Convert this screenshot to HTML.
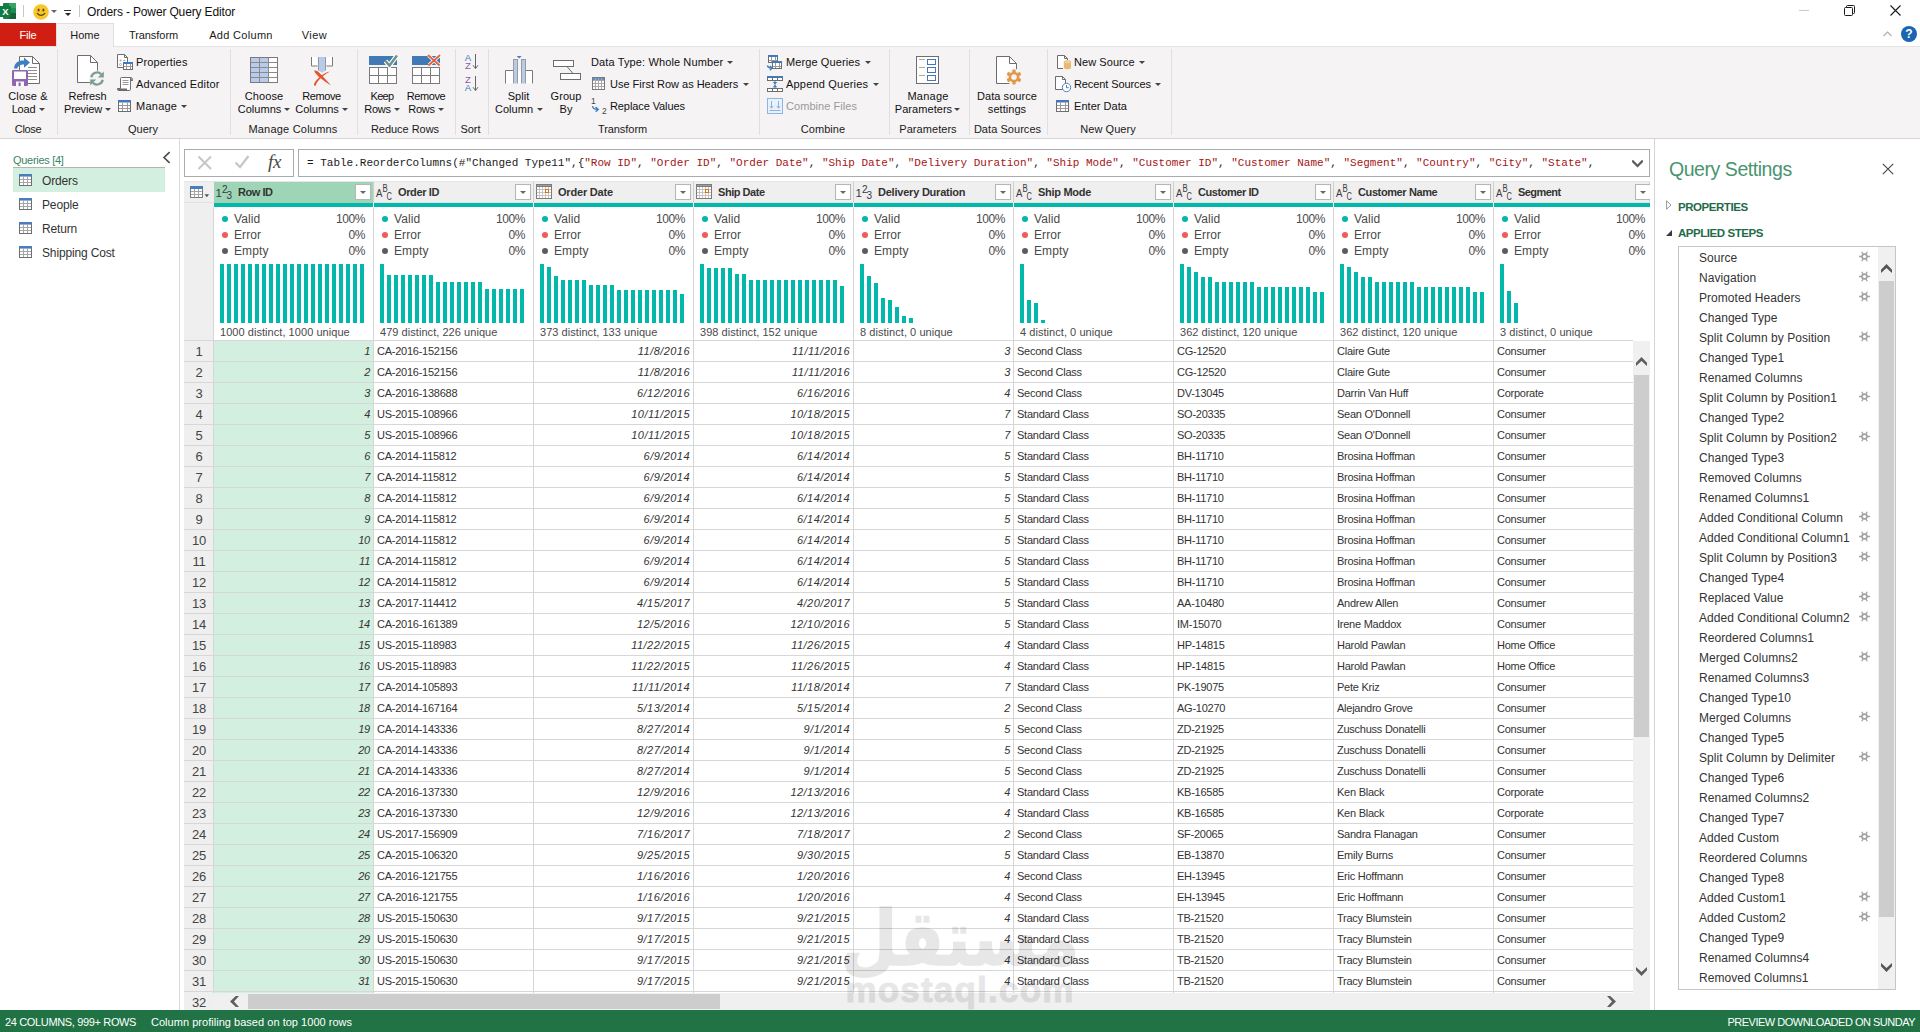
<!DOCTYPE html>
<html lang="en"><head><meta charset="utf-8"><title>Orders - Power Query Editor</title>
<style>
*{box-sizing:border-box;margin:0;padding:0}
html,body{width:1920px;height:1032px;overflow:hidden;background:#fff}
body{position:relative;font-family:"Liberation Sans",sans-serif;font-size:12px;color:#262626;line-height:1}
.a{position:absolute}
.t{position:absolute;white-space:nowrap;line-height:14px;height:14px}
.c{text-align:center}
.r{text-align:right}
svg{position:absolute;overflow:visible}
#ribbon{left:0;top:46px;width:1920px;height:93px;background:#f5f3f4;border-top:1px solid #e4e2e3;border-bottom:1px solid #d6d4d5}
.sep{position:absolute;top:49px;width:1px;height:86px;background:#e1dfe0}
.rt{font-size:11px;color:#111;letter-spacing:.05px}
.gl{font-size:11px;color:#1a1a1a;letter-spacing:.05px}
.tab{font-size:11px;color:#1a1a1a;letter-spacing:.05px}
.dd{position:absolute;width:0;height:0;border-left:3px solid transparent;border-right:3px solid transparent;border-top:3px solid #444}
.q{font-size:12px;color:#333;letter-spacing:-.15px}
.hdr{position:absolute;top:182px;height:21px;background:#efefef;border-right:1px solid #d0d0d0}
.hn{font-weight:bold;font-size:11px;color:#333;letter-spacing:-.35px}
.fb{position:absolute;top:184px;width:16px;height:16px;background:#fff;border:1px solid #b5b5b5}
.teal{position:absolute;top:203px;height:4px;background:#01b8aa}
.pf{font-size:12px;color:#4a4a4a;letter-spacing:.1px}
.ds{font-size:11px;color:#4a4a4a;letter-spacing:.05px}
.dot{position:absolute;width:6px;height:6px;border-radius:3px}
.bar{position:absolute;width:4px;background:#01b8aa}
.cell{font-size:11px;color:#333;letter-spacing:-.25px}
.ci{font-size:11px;color:#333;font-style:italic;letter-spacing:-.25px}
.rn{font-size:13px;color:#444;letter-spacing:-.2px}
.hl{position:absolute;height:1px;background:#d7d7d7}
.vl{position:absolute;width:1px;background:#d6d6d6}
.st{font-size:12px;color:#333;letter-spacing:.05px}
.mono{font-family:"Liberation Mono",monospace;font-size:11px;color:#1a1a1a;white-space:pre}
.mono b{font-weight:normal;color:#a31515}
</style></head>
<body>

<svg style="left:0;top:3px" width="17" height="17" viewBox="0 0 17 17">
<rect x="3" y="0" width="13" height="16" rx="1" fill="#1f7a4a"/>
<rect x="9" y="0" width="7" height="5" fill="#33a567"/><rect x="9" y="5" width="7" height="5" fill="#1f8a52"/><rect x="9" y="10" width="7" height="6" fill="#17603a"/>
<rect x="0" y="3" width="11" height="11" fill="#107c41"/>
<text x="5.5" y="12" font-family="Liberation Sans,sans-serif" font-weight="bold" font-size="9.5" fill="#fff" text-anchor="middle">X</text>
</svg>
<div class="a" style="left:23px;top:5px;width:1px;height:12px;background:#c8c8c8"></div>
<svg style="left:33px;top:4px" width="16" height="16" viewBox="0 0 16 16">
<circle cx="8" cy="8" r="7.8" fill="#f8c52c"/>
<ellipse cx="5.6" cy="6" rx="1" ry="1.5" fill="#5a4308"/><ellipse cx="10.4" cy="6" rx="1" ry="1.5" fill="#5a4308"/>
<path d="M4.2 9.4 Q8 13.4 11.8 9.4" fill="none" stroke="#5a4308" stroke-width="1.2" stroke-linecap="round"/>
</svg>
<div class="dd" style="left:51px;top:10px;border-top-color:#666"></div>
<div class="a" style="left:64px;top:10px;width:7px;height:1px;background:#333"></div>
<div class="dd" style="left:64.5px;top:13px;border-left-width:3px;border-right-width:3px;border-top-width:3px;border-top-color:#222"></div>
<div class="a" style="left:79px;top:5px;width:1px;height:12px;background:#c8c8c8"></div>
<div class="t" style="top:5px;left:87px;font-size:12px;letter-spacing:-.15px;color:#111;">Orders - Power Query Editor</div>
<div class="a" style="left:1799px;top:10px;width:10px;height:1px;background:#c9c9c9"></div>
<svg style="left:1844px;top:5px" width="11" height="11" viewBox="0 0 11 11" fill="none" stroke="#1a1a1a" stroke-width="1">
<rect x="0.5" y="2.5" width="8" height="8" rx="1"/><path d="M2.5 2.5 V1.5 a1 1 0 0 1 1 -1 H9.5 a1 1 0 0 1 1 1 V7.5 a1 1 0 0 1 -1 1 H8.5"/></svg>
<svg style="left:1890px;top:5px" width="11" height="11" viewBox="0 0 11 11" fill="none" stroke="#1a1a1a" stroke-width="1.1">
<path d="M0.5 0.5 L10.5 10.5 M10.5 0.5 L0.5 10.5"/></svg>
<svg style="left:1883px;top:31px" width="9" height="6" viewBox="0 0 9 6" fill="none" stroke="#b0b0b0" stroke-width="1.2"><path d="M0.5 5 L4.5 1 L8.5 5"/></svg>
<svg style="left:1901px;top:26px" width="16" height="16" viewBox="0 0 16 16"><circle cx="8" cy="8" r="8" fill="#1a66b3"/>
<text x="8" y="12.3" font-family="Liberation Sans,sans-serif" font-weight="bold" font-size="12" fill="#fff" text-anchor="middle">?</text></svg>
<div class="a" style="left:0px;top:23px;width:56px;height:23px;background:#d01f12"></div>
<div class="t tab c" style="top:28px;left:0.0px;width:56px;color:#fff;letter-spacing:-0.237px;">File</div>
<div class="a" id="ribbon"></div>
<div class="a" style="left:56px;top:23px;width:58px;height:24px;background:#f5f3f4;border:1px solid #e1dfe0;border-bottom:none"></div>
<div class="t tab c" style="top:28px;left:56.0px;width:58px;letter-spacing:-0.023px;">Home</div>
<div class="t tab c" style="top:28px;left:113.5px;width:80px;letter-spacing:-0.053px;">Transform</div>
<div class="t tab c" style="top:28px;left:196.0px;width:90px;letter-spacing:0.305px;">Add Column</div>
<div class="t tab c" style="top:28px;left:289.5px;width:50px;letter-spacing:0.45px;">View</div>
<div class="sep" style="left:57px"></div>
<div class="sep" style="left:230px"></div>
<div class="sep" style="left:357px"></div>
<div class="sep" style="left:455px"></div>
<div class="sep" style="left:488px"></div>
<div class="sep" style="left:759px"></div>
<div class="sep" style="left:889px"></div>
<div class="sep" style="left:969px"></div>
<div class="sep" style="left:1047px"></div>
<div class="sep" style="left:1171px"></div>
<div class="t gl c" style="top:122px;left:-42.0px;width:140px;letter-spacing:-0.351px;">Close</div>
<div class="t gl c" style="top:122px;left:73.0px;width:140px;letter-spacing:-0.019px;">Query</div>
<div class="t gl c" style="top:122px;left:223.0px;width:140px;letter-spacing:0.212px;">Manage Columns</div>
<div class="t gl c" style="top:122px;left:335.0px;width:140px;letter-spacing:-0.027px;">Reduce Rows</div>
<div class="t gl c" style="top:122px;left:400.5px;width:140px;letter-spacing:-0.062px;">Sort</div>
<div class="t gl c" style="top:122px;left:552.5px;width:140px;letter-spacing:-0.053px;">Transform</div>
<div class="t gl c" style="top:122px;left:753.0px;width:140px;">Combine</div>
<div class="t gl c" style="top:122px;left:858.0px;width:140px;">Parameters</div>
<div class="t gl c" style="top:122px;left:937.5px;width:140px;">Data Sources</div>
<div class="t gl c" style="top:122px;left:1038.0px;width:140px;">New Query</div>
<div class="t rt c" style="top:89px;left:-22.0px;width:100px;letter-spacing:0.15px;">Close &amp;</div>
<div class="t rt c" style="top:102px;left:-22.0px;width:100px;letter-spacing:-0.225px;"><span style="margin-right:9px">Load</span></div>
<div class="dd" style="left:39px;top:108px;border-top-color:#444"></div>
<div class="t rt c" style="top:89px;left:37.5px;width:100px;letter-spacing:-0.083px;">Refresh</div>
<div class="t rt c" style="top:102px;left:37.5px;width:100px;letter-spacing:-0.16px;"><span style="margin-right:9px">Preview</span></div>
<div class="dd" style="left:105px;top:108px;border-top-color:#444"></div>
<div class="t rt c" style="top:89px;left:214.0px;width:100px;letter-spacing:0.061px;">Choose</div>
<div class="t rt c" style="top:102px;left:214.0px;width:100px;letter-spacing:0.034px;"><span style="margin-right:9px">Columns</span></div>
<div class="dd" style="left:284px;top:108px;border-top-color:#444"></div>
<div class="t rt c" style="top:89px;left:271.5px;width:100px;letter-spacing:-0.375px;">Remove</div>
<div class="t rt c" style="top:102px;left:271.5px;width:100px;letter-spacing:0.034px;"><span style="margin-right:9px">Columns</span></div>
<div class="dd" style="left:342px;top:108px;border-top-color:#444"></div>
<div class="t rt c" style="top:89px;left:332.0px;width:100px;letter-spacing:-0.662px;">Keep</div>
<div class="t rt c" style="top:102px;left:332.0px;width:100px;letter-spacing:-0.233px;"><span style="margin-right:9px">Rows</span></div>
<div class="dd" style="left:394px;top:108px;border-top-color:#444"></div>
<div class="t rt c" style="top:89px;left:376.0px;width:100px;letter-spacing:-0.375px;">Remove</div>
<div class="t rt c" style="top:102px;left:376.0px;width:100px;letter-spacing:-0.233px;"><span style="margin-right:9px">Rows</span></div>
<div class="dd" style="left:438px;top:108px;border-top-color:#444"></div>
<div class="t rt c" style="top:89px;left:468.5px;width:100px;">Split</div>
<div class="t rt c" style="top:102px;left:468.5px;width:100px;"><span style="margin-right:9px">Column</span></div>
<div class="dd" style="left:537px;top:108px;border-top-color:#444"></div>
<div class="t rt c" style="top:89px;left:516.0px;width:100px;">Group</div>
<div class="t rt c" style="top:102px;left:516.0px;width:100px;">By</div>
<div class="t rt c" style="top:89px;left:878.0px;width:100px;letter-spacing:0.247px;">Manage</div>
<div class="t rt c" style="top:102px;left:878.0px;width:100px;"><span style="margin-right:9px">Parameters</span></div>
<div class="dd" style="left:954px;top:108px;border-top-color:#444"></div>
<div class="t rt c" style="top:89px;left:957.0px;width:100px;">Data source</div>
<div class="t rt c" style="top:102px;left:957.0px;width:100px;">settings</div>
<div class="t rt" style="top:55px;left:136px;letter-spacing:0.138px;">Properties</div>
<div class="t rt" style="top:77px;left:136px;letter-spacing:0.197px;">Advanced Editor</div>
<div class="t rt" style="top:99px;left:136px;letter-spacing:0.247px;">Manage</div>
<div class="dd" style="left:181px;top:105px;border-top-color:#444"></div>
<div class="t rt" style="top:55px;left:591px;letter-spacing:0.122px;">Data Type: Whole Number</div>
<div class="dd" style="left:727px;top:61px;border-top-color:#444"></div>
<div class="t rt" style="top:77px;left:610px;letter-spacing:-0.007px;">Use First Row as Headers</div>
<div class="dd" style="left:743px;top:83px;border-top-color:#444"></div>
<div class="t rt" style="top:99px;left:610px;letter-spacing:-0.095px;">Replace Values</div>
<div class="t rt" style="top:55px;left:786px;letter-spacing:0.103px;">Merge Queries</div>
<div class="dd" style="left:865px;top:61px;border-top-color:#444"></div>
<div class="t rt" style="top:77px;left:786px;letter-spacing:0.194px;">Append Queries</div>
<div class="dd" style="left:873px;top:83px;border-top-color:#444"></div>
<div class="t rt" style="top:99px;left:786px;color:#9a9a9a;letter-spacing:0.059px;">Combine Files</div>
<div class="t rt" style="top:55px;left:1074px;letter-spacing:0.067px;">New Source</div>
<div class="dd" style="left:1139px;top:61px;border-top-color:#444"></div>
<div class="t rt" style="top:77px;left:1074px;letter-spacing:-0.097px;">Recent Sources</div>
<div class="dd" style="left:1155px;top:83px;border-top-color:#444"></div>
<div class="t rt" style="top:99px;left:1074px;letter-spacing:0.041px;">Enter Data</div>
<svg style="left:0;top:0" width="1920" height="140" viewBox="0 0 1920 140"><path d="M19.5 56.5 H32.5 L39.5 63.5 V83.5 H19.5 Z" fill="#fff" stroke="#6d6d6d"/><path d="M32.5 56.5 V63.5 H39.5" fill="none" stroke="#6d6d6d"/><path d="M28 67.5 H37" stroke="#8c8c8c"/><path d="M28 70.5 H37" stroke="#8c8c8c"/><path d="M28 73.5 H37" stroke="#8c8c8c"/><path d="M28 76.5 H37" stroke="#8c8c8c"/><path d="M28 79.5 H37" stroke="#8c8c8c"/><path d="M14 68.5 C14.5 62.5 19 60.3 24 60.6 V57.6 L30 62.6 L24 67.8 V64.6 C20.5 64.4 18 65.5 17.3 68.5 Z" fill="#3f7fc1"/><rect x="12" y="70" width="16" height="16" rx="1.2" fill="#9166b0"/><rect x="14" y="71.5" width="12" height="7.5" fill="#fff"/><rect x="16" y="81.5" width="8" height="4.5" fill="#fff"/><rect x="18.5" y="82.5" width="2.2" height="3.5" fill="#9166b0"/><path d="M77.5 55.5 H90.5 L97.5 62.5 V82.5 H77.5 Z" fill="#fff" stroke="#6d6d6d"/><path d="M90.5 55.5 V62.5 H97.5" fill="none" stroke="#6d6d6d"/><circle cx="97" cy="78.5" r="8" fill="#f5f3f4"/><path d="M91.3 77.2 A5.8 5.8 0 0 1 101.2 74.3" fill="none" stroke="#7c9c93" stroke-width="2.3"/><path d="M103.8 71.4 V77.4 H97.8 Z" fill="#7c9c93"/><path d="M102.7 79.8 A5.8 5.8 0 0 1 92.8 82.7" fill="none" stroke="#7c9c93" stroke-width="2.3"/><path d="M90.2 85.6 V79.6 H96.2 Z" fill="#7c9c93"/><path d="M117.5 54.5 H124.5 L127.5 57.5 V67.5 H117.5 Z" fill="#fff" stroke="#6d6d6d"/><path d="M124.5 54.5 V57.5 H127.5" fill="none" stroke="#6d6d6d"/><circle cx="120.5" cy="60.5" r="1" fill="#a9b08a"/><path d="M123 60.5 H125.5" stroke="#a9b08a"/><circle cx="120.5" cy="64.5" r="1" fill="none" stroke="#9a9a9a" stroke-width=".7"/><rect x="123.5" y="62.5" width="9" height="7" fill="#fff" stroke="#6d6d6d"/><rect x="123" y="62" width="10" height="2" fill="#4178be"/><path d="M124 66.5 H132" stroke="#9a9a9a"/><path d="M126.5 64 V69" stroke="#9a9a9a"/><path d="M130.5 64 V69" stroke="#9a9a9a"/><path d="M120.5 78.5 Q120.5 77.5 121.5 77.5 H130.5 Q132.5 77.5 132.5 79.5 V80.5 H130.5 V89.5 Q130.5 90.5 129 90.5 H118.5 Q117.5 90.5 117.5 89 V88.5 H120.5 Z" fill="#fff" stroke="#6d6d6d"/><path d="M117.5 88.5 H127 V90.5 H118.5 Z" fill="#6d6d6d"/><path d="M130.5 77.5 V80.5 H132.5" fill="#6d6d6d" stroke="#6d6d6d"/><path d="M122.5 80.5 H128.5" stroke="#9a9a9a"/><path d="M122.5 82.5 H128.5" stroke="#9a9a9a"/><path d="M122.5 84.5 H128.5" stroke="#9a9a9a"/><rect x="118.5" y="100.5" width="12" height="11" fill="#fff" stroke="#6d6d6d"/><rect x="118" y="100" width="13" height="2.5" fill="#4178be"/><path d="M119 105.5 H130" stroke="#9a9a9a"/><path d="M119 108.5 H130" stroke="#9a9a9a"/><path d="M122.5 102.5 V111" stroke="#9a9a9a"/><path d="M127.5 102.5 V111" stroke="#9a9a9a"/><rect x="250.5" y="57.5" width="27" height="25" fill="#fff" stroke="#7a7a7a"/><rect x="251" y="58" width="17.5" height="24" fill="#b9cbea"/><path d="M251 62.5 H277" stroke="#8a8a8a"/><path d="M251 67.5 H277" stroke="#8a8a8a"/><path d="M251 72.5 H277" stroke="#8a8a8a"/><path d="M251 77.5 H277" stroke="#8a8a8a"/><path d="M259.5 58 V82 M268.5 58 V82" stroke="#8a8a8a"/><rect x="312" y="57" width="5.5" height="9" fill="#fff"/><rect x="326.5" y="57" width="5.5" height="9" fill="#fff"/><path d="M311.5 57 V66 H317.5 M326.5 66 H332.5 V57" fill="none" stroke="#7a7a7a"/><path d="M318.5 57 H325.5 V70.5 L322 72.8 L318.5 70.5 Z" fill="#b9cbea"/><path d="M318.5 57 V70.5 M325.5 57 V70.5" stroke="#9a9a9a"/><path d="M314 70.6 C316 70.2 317.5 71.2 319 72.6 C323 76.5 327.5 81.5 331 85.6 C327 83.2 322 79.5 318.5 76.5 C316.5 74.6 315 73 314 70.6 Z" fill="#e4552d"/><path d="M330.2 71.8 C327.5 72.6 324.5 74.8 321.5 77.6 C318.5 80.4 316 83.2 315.6 86 C314.4 85.8 313.8 85 314 84 C315.2 81.2 318 78.4 321 75.8 C324 73.4 327 72 330.2 71.8 Z" fill="#e4552d"/><rect x="369" y="56" width="28" height="9" fill="#4079b6"/><rect x="369.5" y="67.5" width="27" height="16" fill="#fff" stroke="#7a7a7a"/><path d="M370 75.5 H396 M378.5 68 V83 M387.5 68 V83" stroke="#7a7a7a"/><path d="M385.5 61 L389.5 65.5 L397 55.5" fill="none" stroke="#fff" stroke-width="4.6"/><path d="M385.5 61 L389.5 65.5 L397 55.5" fill="none" stroke="#6d9384" stroke-width="2.5"/><rect x="412" y="56" width="28" height="9" fill="#4079b6"/><rect x="412.5" y="67.5" width="27" height="16" fill="#fff" stroke="#7a7a7a"/><path d="M413 75.5 H439 M421.5 68 V83 M430.5 68 V83" stroke="#7a7a7a"/><path d="M428.5 55.5 L439 65 M439.5 55.5 L429 65" fill="none" stroke="#fff" stroke-width="3.6"/><path d="M428.5 55.5 L439 65 M439.5 55.5 L429 65" fill="none" stroke="#e0623e" stroke-width="1.8" stroke-linecap="round"/><text x="468" y="60.9" font-family="Liberation Sans,sans-serif" font-size="9.6" fill="#3a7bc4" text-anchor="middle">A</text><text x="468" y="69" font-family="Liberation Sans,sans-serif" font-size="9.6" fill="#8d5aa8" text-anchor="middle">Z</text><path d="M475.5 54 V68.3 M473 65.2 L475.5 68.6 L478 65.2" fill="none" stroke="#666" stroke-width="1"/><text x="468" y="82.9" font-family="Liberation Sans,sans-serif" font-size="9.6" fill="#8d5aa8" text-anchor="middle">Z</text><text x="468" y="91" font-family="Liberation Sans,sans-serif" font-size="9.6" fill="#3a7bc4" text-anchor="middle">A</text><path d="M475.5 76 V90.3 M473 87.2 L475.5 90.6 L478 87.2" fill="none" stroke="#666" stroke-width="1"/><rect x="506" y="71" width="26" height="13" fill="#fff"/><path d="M505.5 84 V70.5 H513 M525.5 70.5 H532.5 V84" fill="none" stroke="#7a7a7a"/><rect x="513.5" y="59.5" width="4" height="25" fill="#b9cbea" stroke="#9b9b9b" stroke-width="1"/><rect x="521.5" y="59.5" width="4" height="25" fill="#b9cbea" stroke="#9b9b9b" stroke-width="1"/><rect x="504" y="83.5" width="30" height="2" fill="#f5f3f4"/><path d="M516.7 56 H521.7 L519.2 58.5 Z" fill="#3f7fc1"/><rect x="553.5" y="60.5" width="20" height="6" fill="#fff" stroke="#6d6d6d"/><rect x="560.5" y="73.5" width="20" height="6" fill="#fff" stroke="#6d6d6d"/><path d="M567 66.5 L573 73.5" stroke="#6d6d6d"/><rect x="592.5" y="77.5" width="12" height="12" fill="#fff" stroke="#7a7a7a"/><rect x="593" y="78" width="11" height="2.6" fill="#5b8fcf"/><path d="M593 80.5 H604 M593 83.5 H604 M593 86.5 H604 M595.5 78 V89 M598.5 78 V89 M601.5 78 V89" stroke="#a8a8a8"/><text x="593.3" y="104" font-family="Liberation Sans,sans-serif" font-size="8.5" fill="#444" text-anchor="middle">1</text><text x="604.3" y="113.5" font-family="Liberation Sans,sans-serif" font-size="8.5" fill="#444" text-anchor="middle">2</text><path d="M592.5 106 Q593 109.3 597 109.3 M595.6 107 L598.3 109.4 L595.6 111.8" fill="none" stroke="#3f7fc1" stroke-width="1.4"/><rect x="768.5" y="55.5" width="9" height="7" fill="#fff" stroke="#6d6d6d"/><rect x="768" y="55" width="10" height="2" fill="#4178be"/><path d="M769 60.5 H777" stroke="#9a9a9a"/><path d="M771.5 57 V62" stroke="#9a9a9a"/><path d="M775.5 57 V62" stroke="#9a9a9a"/><rect x="772.5" y="61.5" width="9" height="7" fill="#fff" stroke="#6d6d6d"/><rect x="772" y="61" width="10" height="2" fill="#4178be"/><path d="M773 66.5 H781" stroke="#9a9a9a"/><path d="M775.5 63 V68" stroke="#9a9a9a"/><path d="M779.5 63 V68" stroke="#9a9a9a"/><path d="M767.3 65.5 Q768 68 771.3 68 M769.8 66 L772.3 68 L769.8 70.2" fill="none" stroke="#3f7fc1" stroke-width="1.3"/><rect x="767.5" y="76.5" width="15" height="4" fill="#fff" stroke="#6d6d6d"/><rect x="767" y="76" width="16" height="2" fill="#4178be"/><path d="M772.5 77 V80 M777.5 77 V80" stroke="#6d6d6d"/><rect x="767.5" y="88.5" width="15" height="3" fill="#fff" stroke="#6d6d6d"/><path d="M772.5 89 V92 M777.5 89 V92" stroke="#6d6d6d"/><path d="M772.6 82 H777.4 L775 84.3 Z M772.6 87.3 H777.4 L775 85 Z" fill="#3f7fc1"/><path d="M775 81 V88" stroke="#3f7fc1"/><rect x="767.5" y="98.5" width="15" height="15" fill="#e9f2fb" stroke="#8db5e3"/><path d="M771.5 101 V108 M769.7 106 L771.5 108.2 L773.3 106 M778.5 101 V108 M776.7 106 L778.5 108.2 L780.3 106 M769.5 110.5 H780.5" fill="none" stroke="#8fb3de" stroke-width="1"/><rect x="916.5" y="56.5" width="22" height="27" fill="#fff" stroke="#6d6d6d"/><path d="M919 59.5 H925" stroke="#a9b08a"/><rect x="927.5" y="59.5" width="8" height="5" fill="#fff" stroke="#4178be"/><path d="M919 67.5 H925" stroke="#a9b08a"/><rect x="927.5" y="67.5" width="8" height="5" fill="#fff" stroke="#4178be"/><path d="M919 75.5 H925" stroke="#a9b08a"/><rect x="927.5" y="75.5" width="8" height="5" fill="#fff" stroke="#4178be"/><path d="M996.5 56.5 H1009.5 L1016.5 63.5 V83.5 H996.5 Z" fill="#fff" stroke="#6d6d6d"/><path d="M1009.5 56.5 V63.5 H1016.5" fill="none" stroke="#6d6d6d"/><circle cx="1014" cy="77" r="8.2" fill="#f5f3f4"/><rect x="996.5" y="56.5" width="0" height="0"/><rect x="1012.3" y="69.4" width="3.4" height="4.5" rx="1" fill="#e0994a" transform="rotate(0 1014 77)"/><rect x="1012.3" y="69.4" width="3.4" height="4.5" rx="1" fill="#e0994a" transform="rotate(60 1014 77)"/><rect x="1012.3" y="69.4" width="3.4" height="4.5" rx="1" fill="#e0994a" transform="rotate(120 1014 77)"/><rect x="1012.3" y="69.4" width="3.4" height="4.5" rx="1" fill="#e0994a" transform="rotate(180 1014 77)"/><rect x="1012.3" y="69.4" width="3.4" height="4.5" rx="1" fill="#e0994a" transform="rotate(240 1014 77)"/><rect x="1012.3" y="69.4" width="3.4" height="4.5" rx="1" fill="#e0994a" transform="rotate(300 1014 77)"/><circle cx="1014" cy="77" r="4.1" fill="none" stroke="#e0994a" stroke-width="2.5"/><path d="M1057.5 55.5 H1064.5 L1067.5 58.5 V68.5 H1057.5 Z" fill="#fff" stroke="#6d6d6d"/><path d="M1064.5 55.5 V58.5 H1067.5" fill="none" stroke="#6d6d6d"/><rect x="1063" y="60" width="9" height="10" fill="#f5f3f4"/><path d="M1064 62 V68.3 Q1067.5 70.3 1071 68.3 V62 Z" fill="#e9b974"/><ellipse cx="1067.5" cy="62" rx="3.5" ry="1.4" fill="#f1cf9c" stroke="#e9b974" stroke-width=".6"/><path d="M1055.5 76.5 H1062.5 L1065.5 79.5 V89.5 H1055.5 Z" fill="#fff" stroke="#6d6d6d"/><path d="M1062.5 76.5 V79.5 H1065.5" fill="none" stroke="#6d6d6d"/><circle cx="1066.5" cy="87.5" r="4.2" fill="#fff" stroke="#4a86cf" stroke-width="1"/><path d="M1066.5 85 V87.7 H1068.8" fill="none" stroke="#666" stroke-width=".9"/><rect x="1056.5" y="100.5" width="12" height="11" fill="#fff" stroke="#6d6d6d"/><rect x="1056" y="100" width="13" height="2.5" fill="#4178be"/><path d="M1057 105.5 H1068" stroke="#9a9a9a"/><path d="M1057 108.5 H1068" stroke="#9a9a9a"/><path d="M1060.5 102.5 V111" stroke="#9a9a9a"/><path d="M1065.5 102.5 V111" stroke="#9a9a9a"/></svg>
<div class="a" style="left:179px;top:139px;width:1px;height:871px;background:#dadada"></div>
<div class="t" style="top:153px;left:13px;font-size:11px;color:#3a8561;letter-spacing:-.3px;">Queries [4]</div>
<div class="a" style="left:13px;top:167px;width:152px;height:1px;background:#b4b4b4"></div>
<div class="a" style="left:13px;top:168px;width:152px;height:24px;background:#d3efdf"></div>
<svg style="left:162px;top:151px" width="9" height="13" viewBox="0 0 9 13" fill="none" stroke="#4a4a4a" stroke-width="1.6"><path d="M7.6 1.2 L2 6.5 L7.6 11.8"/></svg>
<svg style="left:19px;top:174px" width="13" height="12" viewBox="0 0 13 12">
<rect x=".5" y=".5" width="12" height="11" fill="#fff" stroke="#6f6f6f"/><rect x="0" y="0" width="13" height="2.6" fill="#4a7ebb"/>
<path d="M1 5.5 H12 M1 8.5 H12 M4.5 3 V11 M8.5 3 V11" stroke="#a5a5a5"/></svg>
<div class="t q" style="top:174px;left:42px;">Orders</div>
<svg style="left:19px;top:198px" width="13" height="12" viewBox="0 0 13 12">
<rect x=".5" y=".5" width="12" height="11" fill="#fff" stroke="#6f6f6f"/><rect x="0" y="0" width="13" height="2.6" fill="#4a7ebb"/>
<path d="M1 5.5 H12 M1 8.5 H12 M4.5 3 V11 M8.5 3 V11" stroke="#a5a5a5"/></svg>
<div class="t q" style="top:198px;left:42px;">People</div>
<svg style="left:19px;top:222px" width="13" height="12" viewBox="0 0 13 12">
<rect x=".5" y=".5" width="12" height="11" fill="#fff" stroke="#6f6f6f"/><rect x="0" y="0" width="13" height="2.6" fill="#4a7ebb"/>
<path d="M1 5.5 H12 M1 8.5 H12 M4.5 3 V11 M8.5 3 V11" stroke="#a5a5a5"/></svg>
<div class="t q" style="top:222px;left:42px;">Return</div>
<svg style="left:19px;top:246px" width="13" height="12" viewBox="0 0 13 12">
<rect x=".5" y=".5" width="12" height="11" fill="#fff" stroke="#6f6f6f"/><rect x="0" y="0" width="13" height="2.6" fill="#4a7ebb"/>
<path d="M1 5.5 H12 M1 8.5 H12 M4.5 3 V11 M8.5 3 V11" stroke="#a5a5a5"/></svg>
<div class="t q" style="top:246px;left:42px;">Shipping Cost</div>
<div class="a" style="left:184px;top:149px;width:110px;height:28px;background:#fff;border:1px solid #ababab"></div>
<svg style="left:197px;top:155px" width="16" height="16" viewBox="0 0 16 16" fill="none" stroke="#c6c6c6" stroke-width="2"><path d="M1.5 1.5 L14 14 M14 1.5 L1.5 14"/></svg>
<svg style="left:234px;top:155px" width="16" height="14" viewBox="0 0 16 14" fill="none" stroke="#c6c6c6" stroke-width="2.2"><path d="M1.5 7.5 L6 12 L14.5 1"/></svg>
<div class="t" style="left:268px;top:152px;height:20px;line-height:20px;font-family:'Liberation Serif',serif;font-style:italic;font-size:19px;color:#4a4a4a;letter-spacing:-.3px">fx</div>
<div class="a" style="left:298px;top:149px;width:1352px;height:28px;background:#fff;border:1px solid #ababab"></div>
<div class="t mono" style="left:307px;top:156px">= Table.ReorderColumns(#&quot;Changed Type11&quot;,{<b>&quot;Row ID&quot;</b>, <b>&quot;Order ID&quot;</b>, <b>&quot;Order Date&quot;</b>, <b>&quot;Ship Date&quot;</b>, <b>&quot;Delivery Duration&quot;</b>, <b>&quot;Ship Mode&quot;</b>, <b>&quot;Customer ID&quot;</b>, <b>&quot;Customer Name&quot;</b>, <b>&quot;Segment&quot;</b>, <b>&quot;Country&quot;</b>, <b>&quot;City&quot;</b>, <b>&quot;State&quot;</b>,</div>
<svg style="left:1632px;top:159.5px" width="11" height="7.5" viewBox="0 0 11 7.5"><polygon points="0,0.6 1.2,0 5.5,4.6 9.8,0 11,0.6 11,2 5.5,7.5 0,2" fill="#5a5a5a"/></svg>
<div class="a" style="left:184px;top:182px;width:30px;height:828px;background:#efefef"></div>
<div class="a" style="left:184px;top:181px;width:1466px;height:1px;background:#e6e6e6"></div>
<div class="hdr" style="left:214px;width:160px;background:#9fd5b7"></div>
<div class="hdr" style="left:374px;width:160px;background:#efefef"></div>
<div class="hdr" style="left:534px;width:160px;background:#efefef"></div>
<div class="hdr" style="left:694px;width:160px;background:#efefef"></div>
<div class="hdr" style="left:854px;width:160px;background:#efefef"></div>
<div class="hdr" style="left:1014px;width:160px;background:#efefef"></div>
<div class="hdr" style="left:1174px;width:160px;background:#efefef"></div>
<div class="hdr" style="left:1334px;width:160px;background:#efefef"></div>
<div class="hdr" style="left:1494px;width:156px;background:#efefef"></div>
<div class="a" style="left:184px;top:202px;width:1466px;height:1px;background:#e2e2e2"></div>
<div class="a" style="left:214px;top:202px;width:159px;height:1px;background:#9fd5b7"></div>
<svg style="left:190px;top:186px" width="22" height="12" viewBox="0 0 22 12">
<rect x=".5" y=".5" width="12" height="11" fill="#fff" stroke="#7a7a7a"/><rect x="0" y="0" width="13" height="3" fill="#4a7ebb"/>
<path d="M1 5.5 H12 M1 8.5 H12 M4.5 3 V11 M8.5 3 V11" stroke="#a5a5a5"/><path d="M14.5 8.3 H19.1 L16.8 11.2 Z" fill="#555"/></svg>
<svg style="left:214px;top:182px" width="20" height="21" viewBox="0 0 20 21" font-family="Liberation Sans,sans-serif" fill="#3a3a3a">
<text x="1.6" y="14.8" font-size="11.5">1</text><text x="8" y="10.8" font-size="10">2</text><text x="12.5" y="17.2" font-size="10">3</text></svg>
<div class="t hn" style="top:185px;left:238px;letter-spacing:-0.46px;">Row ID</div>
<div class="fb" style="left:355px"></div>
<div class="dd" style="left:360px;top:191px;border-top-color:#666"></div>
<svg style="left:374px;top:182px" width="20" height="21" viewBox="0 0 20 21" font-family="Liberation Sans,sans-serif" fill="#3a3a3a">
<text x="2" y="15.3" font-size="10.5" textLength="6.4" lengthAdjust="spacingAndGlyphs">A</text><text x="8.6" y="10.2" font-size="10" textLength="5.2" lengthAdjust="spacingAndGlyphs">B</text><text x="12.4" y="17.6" font-size="10" textLength="5.4" lengthAdjust="spacingAndGlyphs">C</text></svg>
<div class="t hn" style="top:185px;left:398px;letter-spacing:-0.36px;">Order ID</div>
<div class="fb" style="left:515px"></div>
<div class="dd" style="left:520px;top:191px;border-top-color:#666"></div>
<svg style="left:536px;top:184px" width="16" height="15" viewBox="0 0 16 15">
<rect x=".5" y=".5" width="15" height="14" fill="#fff" stroke="#7d7d7d"/><rect x="0" y="0" width="16" height="3" fill="#7d7d7d"/>
<path d="M1.5 1.5 H15" stroke="#bdbdbd" stroke-dasharray="1 1"/>
<path d="M1 5.5 H15 M1 8.5 H15 M1 11.5 H15 M3.5 3 V14 M6.5 3 V14 M9.5 3 V14 M12.5 3 V14" stroke="#c4c4c4"/>
<rect x="9.5" y="5.5" width="3" height="3" fill="#fff" stroke="#dd7311" stroke-width="1"/></svg>
<div class="t hn" style="top:185px;left:558px;letter-spacing:-0.19px;">Order Date</div>
<div class="fb" style="left:675px"></div>
<div class="dd" style="left:680px;top:191px;border-top-color:#666"></div>
<svg style="left:696px;top:184px" width="16" height="15" viewBox="0 0 16 15">
<rect x=".5" y=".5" width="15" height="14" fill="#fff" stroke="#7d7d7d"/><rect x="0" y="0" width="16" height="3" fill="#7d7d7d"/>
<path d="M1.5 1.5 H15" stroke="#bdbdbd" stroke-dasharray="1 1"/>
<path d="M1 5.5 H15 M1 8.5 H15 M1 11.5 H15 M3.5 3 V14 M6.5 3 V14 M9.5 3 V14 M12.5 3 V14" stroke="#c4c4c4"/>
<rect x="9.5" y="5.5" width="3" height="3" fill="#fff" stroke="#dd7311" stroke-width="1"/></svg>
<div class="t hn" style="top:185px;left:718px;letter-spacing:-0.46px;">Ship Date</div>
<div class="fb" style="left:835px"></div>
<div class="dd" style="left:840px;top:191px;border-top-color:#666"></div>
<svg style="left:854px;top:182px" width="20" height="21" viewBox="0 0 20 21" font-family="Liberation Sans,sans-serif" fill="#3a3a3a">
<text x="1.6" y="14.8" font-size="11.5">1</text><text x="8" y="10.8" font-size="10">2</text><text x="12.5" y="17.2" font-size="10">3</text></svg>
<div class="t hn" style="top:185px;left:878px;letter-spacing:-0.22px;">Delivery Duration</div>
<div class="fb" style="left:995px"></div>
<div class="dd" style="left:1000px;top:191px;border-top-color:#666"></div>
<svg style="left:1014px;top:182px" width="20" height="21" viewBox="0 0 20 21" font-family="Liberation Sans,sans-serif" fill="#3a3a3a">
<text x="2" y="15.3" font-size="10.5" textLength="6.4" lengthAdjust="spacingAndGlyphs">A</text><text x="8.6" y="10.2" font-size="10" textLength="5.2" lengthAdjust="spacingAndGlyphs">B</text><text x="12.4" y="17.6" font-size="10" textLength="5.4" lengthAdjust="spacingAndGlyphs">C</text></svg>
<div class="t hn" style="top:185px;left:1038px;letter-spacing:-0.29px;">Ship Mode</div>
<div class="fb" style="left:1155px"></div>
<div class="dd" style="left:1160px;top:191px;border-top-color:#666"></div>
<svg style="left:1174px;top:182px" width="20" height="21" viewBox="0 0 20 21" font-family="Liberation Sans,sans-serif" fill="#3a3a3a">
<text x="2" y="15.3" font-size="10.5" textLength="6.4" lengthAdjust="spacingAndGlyphs">A</text><text x="8.6" y="10.2" font-size="10" textLength="5.2" lengthAdjust="spacingAndGlyphs">B</text><text x="12.4" y="17.6" font-size="10" textLength="5.4" lengthAdjust="spacingAndGlyphs">C</text></svg>
<div class="t hn" style="top:185px;left:1198px;letter-spacing:-0.44px;">Customer ID</div>
<div class="fb" style="left:1315px"></div>
<div class="dd" style="left:1320px;top:191px;border-top-color:#666"></div>
<svg style="left:1334px;top:182px" width="20" height="21" viewBox="0 0 20 21" font-family="Liberation Sans,sans-serif" fill="#3a3a3a">
<text x="2" y="15.3" font-size="10.5" textLength="6.4" lengthAdjust="spacingAndGlyphs">A</text><text x="8.6" y="10.2" font-size="10" textLength="5.2" lengthAdjust="spacingAndGlyphs">B</text><text x="12.4" y="17.6" font-size="10" textLength="5.4" lengthAdjust="spacingAndGlyphs">C</text></svg>
<div class="t hn" style="top:185px;left:1358px;letter-spacing:-0.39px;">Customer Name</div>
<div class="fb" style="left:1475px"></div>
<div class="dd" style="left:1480px;top:191px;border-top-color:#666"></div>
<svg style="left:1494px;top:182px" width="20" height="21" viewBox="0 0 20 21" font-family="Liberation Sans,sans-serif" fill="#3a3a3a">
<text x="2" y="15.3" font-size="10.5" textLength="6.4" lengthAdjust="spacingAndGlyphs">A</text><text x="8.6" y="10.2" font-size="10" textLength="5.2" lengthAdjust="spacingAndGlyphs">B</text><text x="12.4" y="17.6" font-size="10" textLength="5.4" lengthAdjust="spacingAndGlyphs">C</text></svg>
<div class="t hn" style="top:185px;left:1518px;letter-spacing:-0.54px;">Segment</div>
<div class="fb" style="left:1635px;width:15px;border-right:none"></div>
<div class="dd" style="left:1640px;top:191px;border-top-color:#666"></div>
<div class="teal" style="left:214px;width:159px"></div>
<div class="teal" style="left:374px;width:159px"></div>
<div class="teal" style="left:534px;width:159px"></div>
<div class="teal" style="left:694px;width:159px"></div>
<div class="teal" style="left:854px;width:159px"></div>
<div class="teal" style="left:1014px;width:159px"></div>
<div class="teal" style="left:1174px;width:159px"></div>
<div class="teal" style="left:1334px;width:159px"></div>
<div class="teal" style="left:1494px;width:156px"></div>
<div class="dot" style="left:222px;top:216px;background:#01b8aa"></div>
<div class="t pf" style="top:212px;left:234px;">Valid</div>
<div class="t pf r" style="top:212px;left:325px;width:40px;letter-spacing:-.45px;">100%</div>
<div class="dot" style="left:222px;top:232px;background:#f2595b"></div>
<div class="t pf" style="top:228px;left:234px;">Error</div>
<div class="t pf r" style="top:228px;left:325px;width:40px;letter-spacing:-.45px;">0%</div>
<div class="dot" style="left:222px;top:248px;background:#5c5c5c"></div>
<div class="t pf" style="top:244px;left:234px;">Empty</div>
<div class="t pf r" style="top:244px;left:325px;width:40px;letter-spacing:-.45px;">0%</div>
<div class="bar" style="left:220px;top:264px;height:59px"></div>
<div class="bar" style="left:227px;top:264px;height:59px"></div>
<div class="bar" style="left:234px;top:264px;height:59px"></div>
<div class="bar" style="left:241px;top:264px;height:59px"></div>
<div class="bar" style="left:248px;top:264px;height:59px"></div>
<div class="bar" style="left:255px;top:264px;height:59px"></div>
<div class="bar" style="left:262px;top:264px;height:59px"></div>
<div class="bar" style="left:269px;top:264px;height:59px"></div>
<div class="bar" style="left:276px;top:264px;height:59px"></div>
<div class="bar" style="left:283px;top:264px;height:59px"></div>
<div class="bar" style="left:290px;top:264px;height:59px"></div>
<div class="bar" style="left:297px;top:264px;height:59px"></div>
<div class="bar" style="left:304px;top:264px;height:59px"></div>
<div class="bar" style="left:311px;top:264px;height:59px"></div>
<div class="bar" style="left:318px;top:264px;height:59px"></div>
<div class="bar" style="left:325px;top:264px;height:59px"></div>
<div class="bar" style="left:332px;top:264px;height:59px"></div>
<div class="bar" style="left:339px;top:264px;height:59px"></div>
<div class="bar" style="left:346px;top:264px;height:59px"></div>
<div class="bar" style="left:353px;top:264px;height:59px"></div>
<div class="bar" style="left:360px;top:264px;height:59px"></div>
<div class="t ds" style="top:325px;left:220px;">1000 distinct, 1000 unique</div>
<div class="dot" style="left:382px;top:216px;background:#01b8aa"></div>
<div class="t pf" style="top:212px;left:394px;">Valid</div>
<div class="t pf r" style="top:212px;left:485px;width:40px;letter-spacing:-.45px;">100%</div>
<div class="dot" style="left:382px;top:232px;background:#f2595b"></div>
<div class="t pf" style="top:228px;left:394px;">Error</div>
<div class="t pf r" style="top:228px;left:485px;width:40px;letter-spacing:-.45px;">0%</div>
<div class="dot" style="left:382px;top:248px;background:#5c5c5c"></div>
<div class="t pf" style="top:244px;left:394px;">Empty</div>
<div class="t pf r" style="top:244px;left:485px;width:40px;letter-spacing:-.45px;">0%</div>
<div class="bar" style="left:380px;top:264px;height:59px"></div>
<div class="bar" style="left:387px;top:275px;height:48px"></div>
<div class="bar" style="left:394px;top:275px;height:48px"></div>
<div class="bar" style="left:401px;top:275px;height:48px"></div>
<div class="bar" style="left:408px;top:275px;height:48px"></div>
<div class="bar" style="left:415px;top:275px;height:48px"></div>
<div class="bar" style="left:422px;top:275px;height:48px"></div>
<div class="bar" style="left:429px;top:275px;height:48px"></div>
<div class="bar" style="left:436px;top:282px;height:41px"></div>
<div class="bar" style="left:443px;top:282px;height:41px"></div>
<div class="bar" style="left:450px;top:282px;height:41px"></div>
<div class="bar" style="left:457px;top:282px;height:41px"></div>
<div class="bar" style="left:464px;top:282px;height:41px"></div>
<div class="bar" style="left:471px;top:282px;height:41px"></div>
<div class="bar" style="left:478px;top:282px;height:41px"></div>
<div class="bar" style="left:485px;top:289px;height:34px"></div>
<div class="bar" style="left:492px;top:289px;height:34px"></div>
<div class="bar" style="left:499px;top:289px;height:34px"></div>
<div class="bar" style="left:506px;top:289px;height:34px"></div>
<div class="bar" style="left:513px;top:289px;height:34px"></div>
<div class="bar" style="left:520px;top:289px;height:34px"></div>
<div class="t ds" style="top:325px;left:380px;">479 distinct, 226 unique</div>
<div class="dot" style="left:542px;top:216px;background:#01b8aa"></div>
<div class="t pf" style="top:212px;left:554px;">Valid</div>
<div class="t pf r" style="top:212px;left:645px;width:40px;letter-spacing:-.45px;">100%</div>
<div class="dot" style="left:542px;top:232px;background:#f2595b"></div>
<div class="t pf" style="top:228px;left:554px;">Error</div>
<div class="t pf r" style="top:228px;left:645px;width:40px;letter-spacing:-.45px;">0%</div>
<div class="dot" style="left:542px;top:248px;background:#5c5c5c"></div>
<div class="t pf" style="top:244px;left:554px;">Empty</div>
<div class="t pf r" style="top:244px;left:645px;width:40px;letter-spacing:-.45px;">0%</div>
<div class="bar" style="left:540px;top:264px;height:59px"></div>
<div class="bar" style="left:547px;top:267px;height:56px"></div>
<div class="bar" style="left:554px;top:276px;height:47px"></div>
<div class="bar" style="left:561px;top:280px;height:43px"></div>
<div class="bar" style="left:568px;top:280px;height:43px"></div>
<div class="bar" style="left:575px;top:280px;height:43px"></div>
<div class="bar" style="left:582px;top:280px;height:43px"></div>
<div class="bar" style="left:589px;top:285px;height:38px"></div>
<div class="bar" style="left:596px;top:285px;height:38px"></div>
<div class="bar" style="left:603px;top:285px;height:38px"></div>
<div class="bar" style="left:610px;top:285px;height:38px"></div>
<div class="bar" style="left:617px;top:290px;height:33px"></div>
<div class="bar" style="left:624px;top:290px;height:33px"></div>
<div class="bar" style="left:631px;top:290px;height:33px"></div>
<div class="bar" style="left:638px;top:290px;height:33px"></div>
<div class="bar" style="left:645px;top:290px;height:33px"></div>
<div class="bar" style="left:652px;top:290px;height:33px"></div>
<div class="bar" style="left:659px;top:290px;height:33px"></div>
<div class="bar" style="left:666px;top:290px;height:33px"></div>
<div class="bar" style="left:673px;top:290px;height:33px"></div>
<div class="bar" style="left:680px;top:294px;height:29px"></div>
<div class="t ds" style="top:325px;left:540px;">373 distinct, 133 unique</div>
<div class="dot" style="left:702px;top:216px;background:#01b8aa"></div>
<div class="t pf" style="top:212px;left:714px;">Valid</div>
<div class="t pf r" style="top:212px;left:805px;width:40px;letter-spacing:-.45px;">100%</div>
<div class="dot" style="left:702px;top:232px;background:#f2595b"></div>
<div class="t pf" style="top:228px;left:714px;">Error</div>
<div class="t pf r" style="top:228px;left:805px;width:40px;letter-spacing:-.45px;">0%</div>
<div class="dot" style="left:702px;top:248px;background:#5c5c5c"></div>
<div class="t pf" style="top:244px;left:714px;">Empty</div>
<div class="t pf r" style="top:244px;left:805px;width:40px;letter-spacing:-.45px;">0%</div>
<div class="bar" style="left:700px;top:264px;height:59px"></div>
<div class="bar" style="left:707px;top:268px;height:55px"></div>
<div class="bar" style="left:714px;top:268px;height:55px"></div>
<div class="bar" style="left:721px;top:268px;height:55px"></div>
<div class="bar" style="left:728px;top:268px;height:55px"></div>
<div class="bar" style="left:735px;top:274px;height:49px"></div>
<div class="bar" style="left:742px;top:274px;height:49px"></div>
<div class="bar" style="left:749px;top:280px;height:43px"></div>
<div class="bar" style="left:756px;top:280px;height:43px"></div>
<div class="bar" style="left:763px;top:280px;height:43px"></div>
<div class="bar" style="left:770px;top:280px;height:43px"></div>
<div class="bar" style="left:777px;top:280px;height:43px"></div>
<div class="bar" style="left:784px;top:280px;height:43px"></div>
<div class="bar" style="left:791px;top:280px;height:43px"></div>
<div class="bar" style="left:798px;top:280px;height:43px"></div>
<div class="bar" style="left:805px;top:280px;height:43px"></div>
<div class="bar" style="left:812px;top:280px;height:43px"></div>
<div class="bar" style="left:819px;top:280px;height:43px"></div>
<div class="bar" style="left:826px;top:280px;height:43px"></div>
<div class="bar" style="left:833px;top:280px;height:43px"></div>
<div class="bar" style="left:840px;top:286px;height:37px"></div>
<div class="t ds" style="top:325px;left:700px;">398 distinct, 152 unique</div>
<div class="dot" style="left:862px;top:216px;background:#01b8aa"></div>
<div class="t pf" style="top:212px;left:874px;">Valid</div>
<div class="t pf r" style="top:212px;left:965px;width:40px;letter-spacing:-.45px;">100%</div>
<div class="dot" style="left:862px;top:232px;background:#f2595b"></div>
<div class="t pf" style="top:228px;left:874px;">Error</div>
<div class="t pf r" style="top:228px;left:965px;width:40px;letter-spacing:-.45px;">0%</div>
<div class="dot" style="left:862px;top:248px;background:#5c5c5c"></div>
<div class="t pf" style="top:244px;left:874px;">Empty</div>
<div class="t pf r" style="top:244px;left:965px;width:40px;letter-spacing:-.45px;">0%</div>
<div class="bar" style="left:860px;top:264px;height:59px"></div>
<div class="bar" style="left:867px;top:276px;height:47px"></div>
<div class="bar" style="left:874px;top:283px;height:40px"></div>
<div class="bar" style="left:881px;top:298px;height:25px"></div>
<div class="bar" style="left:888px;top:300px;height:23px"></div>
<div class="bar" style="left:895px;top:307px;height:16px"></div>
<div class="bar" style="left:902px;top:316px;height:7px"></div>
<div class="bar" style="left:909px;top:318px;height:5px"></div>
<div class="t ds" style="top:325px;left:860px;">8 distinct, 0 unique</div>
<div class="dot" style="left:1022px;top:216px;background:#01b8aa"></div>
<div class="t pf" style="top:212px;left:1034px;">Valid</div>
<div class="t pf r" style="top:212px;left:1125px;width:40px;letter-spacing:-.45px;">100%</div>
<div class="dot" style="left:1022px;top:232px;background:#f2595b"></div>
<div class="t pf" style="top:228px;left:1034px;">Error</div>
<div class="t pf r" style="top:228px;left:1125px;width:40px;letter-spacing:-.45px;">0%</div>
<div class="dot" style="left:1022px;top:248px;background:#5c5c5c"></div>
<div class="t pf" style="top:244px;left:1034px;">Empty</div>
<div class="t pf r" style="top:244px;left:1125px;width:40px;letter-spacing:-.45px;">0%</div>
<div class="bar" style="left:1020px;top:264px;height:59px"></div>
<div class="bar" style="left:1027px;top:300px;height:23px"></div>
<div class="bar" style="left:1034px;top:303px;height:20px"></div>
<div class="bar" style="left:1041px;top:320px;height:3px"></div>
<div class="t ds" style="top:325px;left:1020px;">4 distinct, 0 unique</div>
<div class="dot" style="left:1182px;top:216px;background:#01b8aa"></div>
<div class="t pf" style="top:212px;left:1194px;">Valid</div>
<div class="t pf r" style="top:212px;left:1285px;width:40px;letter-spacing:-.45px;">100%</div>
<div class="dot" style="left:1182px;top:232px;background:#f2595b"></div>
<div class="t pf" style="top:228px;left:1194px;">Error</div>
<div class="t pf r" style="top:228px;left:1285px;width:40px;letter-spacing:-.45px;">0%</div>
<div class="dot" style="left:1182px;top:248px;background:#5c5c5c"></div>
<div class="t pf" style="top:244px;left:1194px;">Empty</div>
<div class="t pf r" style="top:244px;left:1285px;width:40px;letter-spacing:-.45px;">0%</div>
<div class="bar" style="left:1180px;top:264px;height:59px"></div>
<div class="bar" style="left:1187px;top:267px;height:56px"></div>
<div class="bar" style="left:1194px;top:272px;height:51px"></div>
<div class="bar" style="left:1201px;top:277px;height:46px"></div>
<div class="bar" style="left:1208px;top:277px;height:46px"></div>
<div class="bar" style="left:1215px;top:282px;height:41px"></div>
<div class="bar" style="left:1222px;top:282px;height:41px"></div>
<div class="bar" style="left:1229px;top:282px;height:41px"></div>
<div class="bar" style="left:1236px;top:282px;height:41px"></div>
<div class="bar" style="left:1243px;top:282px;height:41px"></div>
<div class="bar" style="left:1250px;top:282px;height:41px"></div>
<div class="bar" style="left:1257px;top:287px;height:36px"></div>
<div class="bar" style="left:1264px;top:287px;height:36px"></div>
<div class="bar" style="left:1271px;top:287px;height:36px"></div>
<div class="bar" style="left:1278px;top:287px;height:36px"></div>
<div class="bar" style="left:1285px;top:287px;height:36px"></div>
<div class="bar" style="left:1292px;top:287px;height:36px"></div>
<div class="bar" style="left:1299px;top:287px;height:36px"></div>
<div class="bar" style="left:1306px;top:287px;height:36px"></div>
<div class="bar" style="left:1313px;top:292px;height:31px"></div>
<div class="bar" style="left:1320px;top:292px;height:31px"></div>
<div class="t ds" style="top:325px;left:1180px;">362 distinct, 120 unique</div>
<div class="dot" style="left:1342px;top:216px;background:#01b8aa"></div>
<div class="t pf" style="top:212px;left:1354px;">Valid</div>
<div class="t pf r" style="top:212px;left:1445px;width:40px;letter-spacing:-.45px;">100%</div>
<div class="dot" style="left:1342px;top:232px;background:#f2595b"></div>
<div class="t pf" style="top:228px;left:1354px;">Error</div>
<div class="t pf r" style="top:228px;left:1445px;width:40px;letter-spacing:-.45px;">0%</div>
<div class="dot" style="left:1342px;top:248px;background:#5c5c5c"></div>
<div class="t pf" style="top:244px;left:1354px;">Empty</div>
<div class="t pf r" style="top:244px;left:1445px;width:40px;letter-spacing:-.45px;">0%</div>
<div class="bar" style="left:1340px;top:264px;height:59px"></div>
<div class="bar" style="left:1347px;top:267px;height:56px"></div>
<div class="bar" style="left:1354px;top:272px;height:51px"></div>
<div class="bar" style="left:1361px;top:277px;height:46px"></div>
<div class="bar" style="left:1368px;top:277px;height:46px"></div>
<div class="bar" style="left:1375px;top:282px;height:41px"></div>
<div class="bar" style="left:1382px;top:282px;height:41px"></div>
<div class="bar" style="left:1389px;top:282px;height:41px"></div>
<div class="bar" style="left:1396px;top:282px;height:41px"></div>
<div class="bar" style="left:1403px;top:282px;height:41px"></div>
<div class="bar" style="left:1410px;top:282px;height:41px"></div>
<div class="bar" style="left:1417px;top:287px;height:36px"></div>
<div class="bar" style="left:1424px;top:287px;height:36px"></div>
<div class="bar" style="left:1431px;top:287px;height:36px"></div>
<div class="bar" style="left:1438px;top:287px;height:36px"></div>
<div class="bar" style="left:1445px;top:287px;height:36px"></div>
<div class="bar" style="left:1452px;top:287px;height:36px"></div>
<div class="bar" style="left:1459px;top:287px;height:36px"></div>
<div class="bar" style="left:1466px;top:287px;height:36px"></div>
<div class="bar" style="left:1473px;top:292px;height:31px"></div>
<div class="bar" style="left:1480px;top:292px;height:31px"></div>
<div class="t ds" style="top:325px;left:1340px;">362 distinct, 120 unique</div>
<div class="dot" style="left:1502px;top:216px;background:#01b8aa"></div>
<div class="t pf" style="top:212px;left:1514px;">Valid</div>
<div class="t pf r" style="top:212px;left:1605px;width:40px;letter-spacing:-.45px;">100%</div>
<div class="dot" style="left:1502px;top:232px;background:#f2595b"></div>
<div class="t pf" style="top:228px;left:1514px;">Error</div>
<div class="t pf r" style="top:228px;left:1605px;width:40px;letter-spacing:-.45px;">0%</div>
<div class="dot" style="left:1502px;top:248px;background:#5c5c5c"></div>
<div class="t pf" style="top:244px;left:1514px;">Empty</div>
<div class="t pf r" style="top:244px;left:1605px;width:40px;letter-spacing:-.45px;">0%</div>
<div class="bar" style="left:1500px;top:264px;height:59px"></div>
<div class="bar" style="left:1507px;top:291px;height:32px"></div>
<div class="bar" style="left:1514px;top:303px;height:20px"></div>
<div class="t ds" style="top:325px;left:1500px;">3 distinct, 0 unique</div>
<div class="a" style="left:214px;top:341px;width:159px;height:652px;background:#d3efdf"></div>
<div class="t rn c" style="top:345px;left:184.0px;width:30px;">1</div>
<div class="t ci r" style="top:344px;left:290px;width:80px;">1</div>
<div class="t cell" style="top:344px;left:377px;">CA-2016-152156</div>
<div class="t ci r" style="top:344px;left:570px;width:120px;letter-spacing:.45px;">11/8/2016</div>
<div class="t ci r" style="top:344px;left:730px;width:120px;letter-spacing:.45px;">11/11/2016</div>
<div class="t ci r" style="top:344px;left:890px;width:120px;">3</div>
<div class="t cell" style="top:344px;left:1017px;">Second Class</div>
<div class="t cell" style="top:344px;left:1177px;">CG-12520</div>
<div class="t cell" style="top:344px;left:1337px;">Claire Gute</div>
<div class="t cell" style="top:344px;left:1497px;">Consumer</div>
<div class="t rn c" style="top:366px;left:184.0px;width:30px;">2</div>
<div class="t ci r" style="top:365px;left:290px;width:80px;">2</div>
<div class="t cell" style="top:365px;left:377px;">CA-2016-152156</div>
<div class="t ci r" style="top:365px;left:570px;width:120px;letter-spacing:.45px;">11/8/2016</div>
<div class="t ci r" style="top:365px;left:730px;width:120px;letter-spacing:.45px;">11/11/2016</div>
<div class="t ci r" style="top:365px;left:890px;width:120px;">3</div>
<div class="t cell" style="top:365px;left:1017px;">Second Class</div>
<div class="t cell" style="top:365px;left:1177px;">CG-12520</div>
<div class="t cell" style="top:365px;left:1337px;">Claire Gute</div>
<div class="t cell" style="top:365px;left:1497px;">Consumer</div>
<div class="t rn c" style="top:387px;left:184.0px;width:30px;">3</div>
<div class="t ci r" style="top:386px;left:290px;width:80px;">3</div>
<div class="t cell" style="top:386px;left:377px;">CA-2016-138688</div>
<div class="t ci r" style="top:386px;left:570px;width:120px;letter-spacing:.45px;">6/12/2016</div>
<div class="t ci r" style="top:386px;left:730px;width:120px;letter-spacing:.45px;">6/16/2016</div>
<div class="t ci r" style="top:386px;left:890px;width:120px;">4</div>
<div class="t cell" style="top:386px;left:1017px;">Second Class</div>
<div class="t cell" style="top:386px;left:1177px;">DV-13045</div>
<div class="t cell" style="top:386px;left:1337px;">Darrin Van Huff</div>
<div class="t cell" style="top:386px;left:1497px;">Corporate</div>
<div class="t rn c" style="top:408px;left:184.0px;width:30px;">4</div>
<div class="t ci r" style="top:407px;left:290px;width:80px;">4</div>
<div class="t cell" style="top:407px;left:377px;">US-2015-108966</div>
<div class="t ci r" style="top:407px;left:570px;width:120px;letter-spacing:.45px;">10/11/2015</div>
<div class="t ci r" style="top:407px;left:730px;width:120px;letter-spacing:.45px;">10/18/2015</div>
<div class="t ci r" style="top:407px;left:890px;width:120px;">7</div>
<div class="t cell" style="top:407px;left:1017px;">Standard Class</div>
<div class="t cell" style="top:407px;left:1177px;">SO-20335</div>
<div class="t cell" style="top:407px;left:1337px;">Sean O&#x27;Donnell</div>
<div class="t cell" style="top:407px;left:1497px;">Consumer</div>
<div class="t rn c" style="top:429px;left:184.0px;width:30px;">5</div>
<div class="t ci r" style="top:428px;left:290px;width:80px;">5</div>
<div class="t cell" style="top:428px;left:377px;">US-2015-108966</div>
<div class="t ci r" style="top:428px;left:570px;width:120px;letter-spacing:.45px;">10/11/2015</div>
<div class="t ci r" style="top:428px;left:730px;width:120px;letter-spacing:.45px;">10/18/2015</div>
<div class="t ci r" style="top:428px;left:890px;width:120px;">7</div>
<div class="t cell" style="top:428px;left:1017px;">Standard Class</div>
<div class="t cell" style="top:428px;left:1177px;">SO-20335</div>
<div class="t cell" style="top:428px;left:1337px;">Sean O&#x27;Donnell</div>
<div class="t cell" style="top:428px;left:1497px;">Consumer</div>
<div class="t rn c" style="top:450px;left:184.0px;width:30px;">6</div>
<div class="t ci r" style="top:449px;left:290px;width:80px;">6</div>
<div class="t cell" style="top:449px;left:377px;">CA-2014-115812</div>
<div class="t ci r" style="top:449px;left:570px;width:120px;letter-spacing:.45px;">6/9/2014</div>
<div class="t ci r" style="top:449px;left:730px;width:120px;letter-spacing:.45px;">6/14/2014</div>
<div class="t ci r" style="top:449px;left:890px;width:120px;">5</div>
<div class="t cell" style="top:449px;left:1017px;">Standard Class</div>
<div class="t cell" style="top:449px;left:1177px;">BH-11710</div>
<div class="t cell" style="top:449px;left:1337px;">Brosina Hoffman</div>
<div class="t cell" style="top:449px;left:1497px;">Consumer</div>
<div class="t rn c" style="top:471px;left:184.0px;width:30px;">7</div>
<div class="t ci r" style="top:470px;left:290px;width:80px;">7</div>
<div class="t cell" style="top:470px;left:377px;">CA-2014-115812</div>
<div class="t ci r" style="top:470px;left:570px;width:120px;letter-spacing:.45px;">6/9/2014</div>
<div class="t ci r" style="top:470px;left:730px;width:120px;letter-spacing:.45px;">6/14/2014</div>
<div class="t ci r" style="top:470px;left:890px;width:120px;">5</div>
<div class="t cell" style="top:470px;left:1017px;">Standard Class</div>
<div class="t cell" style="top:470px;left:1177px;">BH-11710</div>
<div class="t cell" style="top:470px;left:1337px;">Brosina Hoffman</div>
<div class="t cell" style="top:470px;left:1497px;">Consumer</div>
<div class="t rn c" style="top:492px;left:184.0px;width:30px;">8</div>
<div class="t ci r" style="top:491px;left:290px;width:80px;">8</div>
<div class="t cell" style="top:491px;left:377px;">CA-2014-115812</div>
<div class="t ci r" style="top:491px;left:570px;width:120px;letter-spacing:.45px;">6/9/2014</div>
<div class="t ci r" style="top:491px;left:730px;width:120px;letter-spacing:.45px;">6/14/2014</div>
<div class="t ci r" style="top:491px;left:890px;width:120px;">5</div>
<div class="t cell" style="top:491px;left:1017px;">Standard Class</div>
<div class="t cell" style="top:491px;left:1177px;">BH-11710</div>
<div class="t cell" style="top:491px;left:1337px;">Brosina Hoffman</div>
<div class="t cell" style="top:491px;left:1497px;">Consumer</div>
<div class="t rn c" style="top:513px;left:184.0px;width:30px;">9</div>
<div class="t ci r" style="top:512px;left:290px;width:80px;">9</div>
<div class="t cell" style="top:512px;left:377px;">CA-2014-115812</div>
<div class="t ci r" style="top:512px;left:570px;width:120px;letter-spacing:.45px;">6/9/2014</div>
<div class="t ci r" style="top:512px;left:730px;width:120px;letter-spacing:.45px;">6/14/2014</div>
<div class="t ci r" style="top:512px;left:890px;width:120px;">5</div>
<div class="t cell" style="top:512px;left:1017px;">Standard Class</div>
<div class="t cell" style="top:512px;left:1177px;">BH-11710</div>
<div class="t cell" style="top:512px;left:1337px;">Brosina Hoffman</div>
<div class="t cell" style="top:512px;left:1497px;">Consumer</div>
<div class="t rn c" style="top:534px;left:184.0px;width:30px;">10</div>
<div class="t ci r" style="top:533px;left:290px;width:80px;">10</div>
<div class="t cell" style="top:533px;left:377px;">CA-2014-115812</div>
<div class="t ci r" style="top:533px;left:570px;width:120px;letter-spacing:.45px;">6/9/2014</div>
<div class="t ci r" style="top:533px;left:730px;width:120px;letter-spacing:.45px;">6/14/2014</div>
<div class="t ci r" style="top:533px;left:890px;width:120px;">5</div>
<div class="t cell" style="top:533px;left:1017px;">Standard Class</div>
<div class="t cell" style="top:533px;left:1177px;">BH-11710</div>
<div class="t cell" style="top:533px;left:1337px;">Brosina Hoffman</div>
<div class="t cell" style="top:533px;left:1497px;">Consumer</div>
<div class="t rn c" style="top:555px;left:184.0px;width:30px;">11</div>
<div class="t ci r" style="top:554px;left:290px;width:80px;">11</div>
<div class="t cell" style="top:554px;left:377px;">CA-2014-115812</div>
<div class="t ci r" style="top:554px;left:570px;width:120px;letter-spacing:.45px;">6/9/2014</div>
<div class="t ci r" style="top:554px;left:730px;width:120px;letter-spacing:.45px;">6/14/2014</div>
<div class="t ci r" style="top:554px;left:890px;width:120px;">5</div>
<div class="t cell" style="top:554px;left:1017px;">Standard Class</div>
<div class="t cell" style="top:554px;left:1177px;">BH-11710</div>
<div class="t cell" style="top:554px;left:1337px;">Brosina Hoffman</div>
<div class="t cell" style="top:554px;left:1497px;">Consumer</div>
<div class="t rn c" style="top:576px;left:184.0px;width:30px;">12</div>
<div class="t ci r" style="top:575px;left:290px;width:80px;">12</div>
<div class="t cell" style="top:575px;left:377px;">CA-2014-115812</div>
<div class="t ci r" style="top:575px;left:570px;width:120px;letter-spacing:.45px;">6/9/2014</div>
<div class="t ci r" style="top:575px;left:730px;width:120px;letter-spacing:.45px;">6/14/2014</div>
<div class="t ci r" style="top:575px;left:890px;width:120px;">5</div>
<div class="t cell" style="top:575px;left:1017px;">Standard Class</div>
<div class="t cell" style="top:575px;left:1177px;">BH-11710</div>
<div class="t cell" style="top:575px;left:1337px;">Brosina Hoffman</div>
<div class="t cell" style="top:575px;left:1497px;">Consumer</div>
<div class="t rn c" style="top:597px;left:184.0px;width:30px;">13</div>
<div class="t ci r" style="top:596px;left:290px;width:80px;">13</div>
<div class="t cell" style="top:596px;left:377px;">CA-2017-114412</div>
<div class="t ci r" style="top:596px;left:570px;width:120px;letter-spacing:.45px;">4/15/2017</div>
<div class="t ci r" style="top:596px;left:730px;width:120px;letter-spacing:.45px;">4/20/2017</div>
<div class="t ci r" style="top:596px;left:890px;width:120px;">5</div>
<div class="t cell" style="top:596px;left:1017px;">Standard Class</div>
<div class="t cell" style="top:596px;left:1177px;">AA-10480</div>
<div class="t cell" style="top:596px;left:1337px;">Andrew Allen</div>
<div class="t cell" style="top:596px;left:1497px;">Consumer</div>
<div class="t rn c" style="top:618px;left:184.0px;width:30px;">14</div>
<div class="t ci r" style="top:617px;left:290px;width:80px;">14</div>
<div class="t cell" style="top:617px;left:377px;">CA-2016-161389</div>
<div class="t ci r" style="top:617px;left:570px;width:120px;letter-spacing:.45px;">12/5/2016</div>
<div class="t ci r" style="top:617px;left:730px;width:120px;letter-spacing:.45px;">12/10/2016</div>
<div class="t ci r" style="top:617px;left:890px;width:120px;">5</div>
<div class="t cell" style="top:617px;left:1017px;">Standard Class</div>
<div class="t cell" style="top:617px;left:1177px;">IM-15070</div>
<div class="t cell" style="top:617px;left:1337px;">Irene Maddox</div>
<div class="t cell" style="top:617px;left:1497px;">Consumer</div>
<div class="t rn c" style="top:639px;left:184.0px;width:30px;">15</div>
<div class="t ci r" style="top:638px;left:290px;width:80px;">15</div>
<div class="t cell" style="top:638px;left:377px;">US-2015-118983</div>
<div class="t ci r" style="top:638px;left:570px;width:120px;letter-spacing:.45px;">11/22/2015</div>
<div class="t ci r" style="top:638px;left:730px;width:120px;letter-spacing:.45px;">11/26/2015</div>
<div class="t ci r" style="top:638px;left:890px;width:120px;">4</div>
<div class="t cell" style="top:638px;left:1017px;">Standard Class</div>
<div class="t cell" style="top:638px;left:1177px;">HP-14815</div>
<div class="t cell" style="top:638px;left:1337px;">Harold Pawlan</div>
<div class="t cell" style="top:638px;left:1497px;">Home Office</div>
<div class="t rn c" style="top:660px;left:184.0px;width:30px;">16</div>
<div class="t ci r" style="top:659px;left:290px;width:80px;">16</div>
<div class="t cell" style="top:659px;left:377px;">US-2015-118983</div>
<div class="t ci r" style="top:659px;left:570px;width:120px;letter-spacing:.45px;">11/22/2015</div>
<div class="t ci r" style="top:659px;left:730px;width:120px;letter-spacing:.45px;">11/26/2015</div>
<div class="t ci r" style="top:659px;left:890px;width:120px;">4</div>
<div class="t cell" style="top:659px;left:1017px;">Standard Class</div>
<div class="t cell" style="top:659px;left:1177px;">HP-14815</div>
<div class="t cell" style="top:659px;left:1337px;">Harold Pawlan</div>
<div class="t cell" style="top:659px;left:1497px;">Home Office</div>
<div class="t rn c" style="top:681px;left:184.0px;width:30px;">17</div>
<div class="t ci r" style="top:680px;left:290px;width:80px;">17</div>
<div class="t cell" style="top:680px;left:377px;">CA-2014-105893</div>
<div class="t ci r" style="top:680px;left:570px;width:120px;letter-spacing:.45px;">11/11/2014</div>
<div class="t ci r" style="top:680px;left:730px;width:120px;letter-spacing:.45px;">11/18/2014</div>
<div class="t ci r" style="top:680px;left:890px;width:120px;">7</div>
<div class="t cell" style="top:680px;left:1017px;">Standard Class</div>
<div class="t cell" style="top:680px;left:1177px;">PK-19075</div>
<div class="t cell" style="top:680px;left:1337px;">Pete Kriz</div>
<div class="t cell" style="top:680px;left:1497px;">Consumer</div>
<div class="t rn c" style="top:702px;left:184.0px;width:30px;">18</div>
<div class="t ci r" style="top:701px;left:290px;width:80px;">18</div>
<div class="t cell" style="top:701px;left:377px;">CA-2014-167164</div>
<div class="t ci r" style="top:701px;left:570px;width:120px;letter-spacing:.45px;">5/13/2014</div>
<div class="t ci r" style="top:701px;left:730px;width:120px;letter-spacing:.45px;">5/15/2014</div>
<div class="t ci r" style="top:701px;left:890px;width:120px;">2</div>
<div class="t cell" style="top:701px;left:1017px;">Second Class</div>
<div class="t cell" style="top:701px;left:1177px;">AG-10270</div>
<div class="t cell" style="top:701px;left:1337px;">Alejandro Grove</div>
<div class="t cell" style="top:701px;left:1497px;">Consumer</div>
<div class="t rn c" style="top:723px;left:184.0px;width:30px;">19</div>
<div class="t ci r" style="top:722px;left:290px;width:80px;">19</div>
<div class="t cell" style="top:722px;left:377px;">CA-2014-143336</div>
<div class="t ci r" style="top:722px;left:570px;width:120px;letter-spacing:.45px;">8/27/2014</div>
<div class="t ci r" style="top:722px;left:730px;width:120px;letter-spacing:.45px;">9/1/2014</div>
<div class="t ci r" style="top:722px;left:890px;width:120px;">5</div>
<div class="t cell" style="top:722px;left:1017px;">Second Class</div>
<div class="t cell" style="top:722px;left:1177px;">ZD-21925</div>
<div class="t cell" style="top:722px;left:1337px;">Zuschuss Donatelli</div>
<div class="t cell" style="top:722px;left:1497px;">Consumer</div>
<div class="t rn c" style="top:744px;left:184.0px;width:30px;">20</div>
<div class="t ci r" style="top:743px;left:290px;width:80px;">20</div>
<div class="t cell" style="top:743px;left:377px;">CA-2014-143336</div>
<div class="t ci r" style="top:743px;left:570px;width:120px;letter-spacing:.45px;">8/27/2014</div>
<div class="t ci r" style="top:743px;left:730px;width:120px;letter-spacing:.45px;">9/1/2014</div>
<div class="t ci r" style="top:743px;left:890px;width:120px;">5</div>
<div class="t cell" style="top:743px;left:1017px;">Second Class</div>
<div class="t cell" style="top:743px;left:1177px;">ZD-21925</div>
<div class="t cell" style="top:743px;left:1337px;">Zuschuss Donatelli</div>
<div class="t cell" style="top:743px;left:1497px;">Consumer</div>
<div class="t rn c" style="top:765px;left:184.0px;width:30px;">21</div>
<div class="t ci r" style="top:764px;left:290px;width:80px;">21</div>
<div class="t cell" style="top:764px;left:377px;">CA-2014-143336</div>
<div class="t ci r" style="top:764px;left:570px;width:120px;letter-spacing:.45px;">8/27/2014</div>
<div class="t ci r" style="top:764px;left:730px;width:120px;letter-spacing:.45px;">9/1/2014</div>
<div class="t ci r" style="top:764px;left:890px;width:120px;">5</div>
<div class="t cell" style="top:764px;left:1017px;">Second Class</div>
<div class="t cell" style="top:764px;left:1177px;">ZD-21925</div>
<div class="t cell" style="top:764px;left:1337px;">Zuschuss Donatelli</div>
<div class="t cell" style="top:764px;left:1497px;">Consumer</div>
<div class="t rn c" style="top:786px;left:184.0px;width:30px;">22</div>
<div class="t ci r" style="top:785px;left:290px;width:80px;">22</div>
<div class="t cell" style="top:785px;left:377px;">CA-2016-137330</div>
<div class="t ci r" style="top:785px;left:570px;width:120px;letter-spacing:.45px;">12/9/2016</div>
<div class="t ci r" style="top:785px;left:730px;width:120px;letter-spacing:.45px;">12/13/2016</div>
<div class="t ci r" style="top:785px;left:890px;width:120px;">4</div>
<div class="t cell" style="top:785px;left:1017px;">Standard Class</div>
<div class="t cell" style="top:785px;left:1177px;">KB-16585</div>
<div class="t cell" style="top:785px;left:1337px;">Ken Black</div>
<div class="t cell" style="top:785px;left:1497px;">Corporate</div>
<div class="t rn c" style="top:807px;left:184.0px;width:30px;">23</div>
<div class="t ci r" style="top:806px;left:290px;width:80px;">23</div>
<div class="t cell" style="top:806px;left:377px;">CA-2016-137330</div>
<div class="t ci r" style="top:806px;left:570px;width:120px;letter-spacing:.45px;">12/9/2016</div>
<div class="t ci r" style="top:806px;left:730px;width:120px;letter-spacing:.45px;">12/13/2016</div>
<div class="t ci r" style="top:806px;left:890px;width:120px;">4</div>
<div class="t cell" style="top:806px;left:1017px;">Standard Class</div>
<div class="t cell" style="top:806px;left:1177px;">KB-16585</div>
<div class="t cell" style="top:806px;left:1337px;">Ken Black</div>
<div class="t cell" style="top:806px;left:1497px;">Corporate</div>
<div class="t rn c" style="top:828px;left:184.0px;width:30px;">24</div>
<div class="t ci r" style="top:827px;left:290px;width:80px;">24</div>
<div class="t cell" style="top:827px;left:377px;">US-2017-156909</div>
<div class="t ci r" style="top:827px;left:570px;width:120px;letter-spacing:.45px;">7/16/2017</div>
<div class="t ci r" style="top:827px;left:730px;width:120px;letter-spacing:.45px;">7/18/2017</div>
<div class="t ci r" style="top:827px;left:890px;width:120px;">2</div>
<div class="t cell" style="top:827px;left:1017px;">Second Class</div>
<div class="t cell" style="top:827px;left:1177px;">SF-20065</div>
<div class="t cell" style="top:827px;left:1337px;">Sandra Flanagan</div>
<div class="t cell" style="top:827px;left:1497px;">Consumer</div>
<div class="t rn c" style="top:849px;left:184.0px;width:30px;">25</div>
<div class="t ci r" style="top:848px;left:290px;width:80px;">25</div>
<div class="t cell" style="top:848px;left:377px;">CA-2015-106320</div>
<div class="t ci r" style="top:848px;left:570px;width:120px;letter-spacing:.45px;">9/25/2015</div>
<div class="t ci r" style="top:848px;left:730px;width:120px;letter-spacing:.45px;">9/30/2015</div>
<div class="t ci r" style="top:848px;left:890px;width:120px;">5</div>
<div class="t cell" style="top:848px;left:1017px;">Standard Class</div>
<div class="t cell" style="top:848px;left:1177px;">EB-13870</div>
<div class="t cell" style="top:848px;left:1337px;">Emily Burns</div>
<div class="t cell" style="top:848px;left:1497px;">Consumer</div>
<div class="t rn c" style="top:870px;left:184.0px;width:30px;">26</div>
<div class="t ci r" style="top:869px;left:290px;width:80px;">26</div>
<div class="t cell" style="top:869px;left:377px;">CA-2016-121755</div>
<div class="t ci r" style="top:869px;left:570px;width:120px;letter-spacing:.45px;">1/16/2016</div>
<div class="t ci r" style="top:869px;left:730px;width:120px;letter-spacing:.45px;">1/20/2016</div>
<div class="t ci r" style="top:869px;left:890px;width:120px;">4</div>
<div class="t cell" style="top:869px;left:1017px;">Second Class</div>
<div class="t cell" style="top:869px;left:1177px;">EH-13945</div>
<div class="t cell" style="top:869px;left:1337px;">Eric Hoffmann</div>
<div class="t cell" style="top:869px;left:1497px;">Consumer</div>
<div class="t rn c" style="top:891px;left:184.0px;width:30px;">27</div>
<div class="t ci r" style="top:890px;left:290px;width:80px;">27</div>
<div class="t cell" style="top:890px;left:377px;">CA-2016-121755</div>
<div class="t ci r" style="top:890px;left:570px;width:120px;letter-spacing:.45px;">1/16/2016</div>
<div class="t ci r" style="top:890px;left:730px;width:120px;letter-spacing:.45px;">1/20/2016</div>
<div class="t ci r" style="top:890px;left:890px;width:120px;">4</div>
<div class="t cell" style="top:890px;left:1017px;">Second Class</div>
<div class="t cell" style="top:890px;left:1177px;">EH-13945</div>
<div class="t cell" style="top:890px;left:1337px;">Eric Hoffmann</div>
<div class="t cell" style="top:890px;left:1497px;">Consumer</div>
<div class="t rn c" style="top:912px;left:184.0px;width:30px;">28</div>
<div class="t ci r" style="top:911px;left:290px;width:80px;">28</div>
<div class="t cell" style="top:911px;left:377px;">US-2015-150630</div>
<div class="t ci r" style="top:911px;left:570px;width:120px;letter-spacing:.45px;">9/17/2015</div>
<div class="t ci r" style="top:911px;left:730px;width:120px;letter-spacing:.45px;">9/21/2015</div>
<div class="t ci r" style="top:911px;left:890px;width:120px;">4</div>
<div class="t cell" style="top:911px;left:1017px;">Standard Class</div>
<div class="t cell" style="top:911px;left:1177px;">TB-21520</div>
<div class="t cell" style="top:911px;left:1337px;">Tracy Blumstein</div>
<div class="t cell" style="top:911px;left:1497px;">Consumer</div>
<div class="t rn c" style="top:933px;left:184.0px;width:30px;">29</div>
<div class="t ci r" style="top:932px;left:290px;width:80px;">29</div>
<div class="t cell" style="top:932px;left:377px;">US-2015-150630</div>
<div class="t ci r" style="top:932px;left:570px;width:120px;letter-spacing:.45px;">9/17/2015</div>
<div class="t ci r" style="top:932px;left:730px;width:120px;letter-spacing:.45px;">9/21/2015</div>
<div class="t ci r" style="top:932px;left:890px;width:120px;">4</div>
<div class="t cell" style="top:932px;left:1017px;">Standard Class</div>
<div class="t cell" style="top:932px;left:1177px;">TB-21520</div>
<div class="t cell" style="top:932px;left:1337px;">Tracy Blumstein</div>
<div class="t cell" style="top:932px;left:1497px;">Consumer</div>
<div class="t rn c" style="top:954px;left:184.0px;width:30px;">30</div>
<div class="t ci r" style="top:953px;left:290px;width:80px;">30</div>
<div class="t cell" style="top:953px;left:377px;">US-2015-150630</div>
<div class="t ci r" style="top:953px;left:570px;width:120px;letter-spacing:.45px;">9/17/2015</div>
<div class="t ci r" style="top:953px;left:730px;width:120px;letter-spacing:.45px;">9/21/2015</div>
<div class="t ci r" style="top:953px;left:890px;width:120px;">4</div>
<div class="t cell" style="top:953px;left:1017px;">Standard Class</div>
<div class="t cell" style="top:953px;left:1177px;">TB-21520</div>
<div class="t cell" style="top:953px;left:1337px;">Tracy Blumstein</div>
<div class="t cell" style="top:953px;left:1497px;">Consumer</div>
<div class="t rn c" style="top:975px;left:184.0px;width:30px;">31</div>
<div class="t ci r" style="top:974px;left:290px;width:80px;">31</div>
<div class="t cell" style="top:974px;left:377px;">US-2015-150630</div>
<div class="t ci r" style="top:974px;left:570px;width:120px;letter-spacing:.45px;">9/17/2015</div>
<div class="t ci r" style="top:974px;left:730px;width:120px;letter-spacing:.45px;">9/21/2015</div>
<div class="t ci r" style="top:974px;left:890px;width:120px;">4</div>
<div class="t cell" style="top:974px;left:1017px;">Standard Class</div>
<div class="t cell" style="top:974px;left:1177px;">TB-21520</div>
<div class="t cell" style="top:974px;left:1337px;">Tracy Blumstein</div>
<div class="t cell" style="top:974px;left:1497px;">Consumer</div>
<div class="t rn c" style="top:996px;left:184.0px;width:30px;">32</div>
<div class="hl" style="left:184px;top:340px;width:1449px"></div>
<div class="hl" style="left:184px;top:361px;width:1449px"></div>
<div class="hl" style="left:184px;top:382px;width:1449px"></div>
<div class="hl" style="left:184px;top:403px;width:1449px"></div>
<div class="hl" style="left:184px;top:424px;width:1449px"></div>
<div class="hl" style="left:184px;top:445px;width:1449px"></div>
<div class="hl" style="left:184px;top:466px;width:1449px"></div>
<div class="hl" style="left:184px;top:487px;width:1449px"></div>
<div class="hl" style="left:184px;top:508px;width:1449px"></div>
<div class="hl" style="left:184px;top:529px;width:1449px"></div>
<div class="hl" style="left:184px;top:550px;width:1449px"></div>
<div class="hl" style="left:184px;top:571px;width:1449px"></div>
<div class="hl" style="left:184px;top:592px;width:1449px"></div>
<div class="hl" style="left:184px;top:613px;width:1449px"></div>
<div class="hl" style="left:184px;top:634px;width:1449px"></div>
<div class="hl" style="left:184px;top:655px;width:1449px"></div>
<div class="hl" style="left:184px;top:676px;width:1449px"></div>
<div class="hl" style="left:184px;top:697px;width:1449px"></div>
<div class="hl" style="left:184px;top:718px;width:1449px"></div>
<div class="hl" style="left:184px;top:739px;width:1449px"></div>
<div class="hl" style="left:184px;top:760px;width:1449px"></div>
<div class="hl" style="left:184px;top:781px;width:1449px"></div>
<div class="hl" style="left:184px;top:802px;width:1449px"></div>
<div class="hl" style="left:184px;top:823px;width:1449px"></div>
<div class="hl" style="left:184px;top:844px;width:1449px"></div>
<div class="hl" style="left:184px;top:865px;width:1449px"></div>
<div class="hl" style="left:184px;top:886px;width:1449px"></div>
<div class="hl" style="left:184px;top:907px;width:1449px"></div>
<div class="hl" style="left:184px;top:928px;width:1449px"></div>
<div class="hl" style="left:184px;top:949px;width:1449px"></div>
<div class="hl" style="left:184px;top:970px;width:1449px"></div>
<div class="hl" style="left:184px;top:991px;width:1449px"></div>
<div class="vl" style="left:213px;top:207px;height:786px"></div>
<div class="vl" style="left:373px;top:207px;height:786px"></div>
<div class="vl" style="left:533px;top:207px;height:786px"></div>
<div class="vl" style="left:693px;top:207px;height:786px"></div>
<div class="vl" style="left:853px;top:207px;height:786px"></div>
<div class="vl" style="left:1013px;top:207px;height:786px"></div>
<div class="vl" style="left:1173px;top:207px;height:786px"></div>
<div class="vl" style="left:1333px;top:207px;height:786px"></div>
<div class="vl" style="left:1493px;top:207px;height:786px"></div>
<div class="a" style="left:1650px;top:139px;width:1px;height:871px;background:#fff"></div>
<div class="a" style="left:1633px;top:341px;width:17px;height:669px;background:#f0f0f0"></div>
<div class="a" style="left:1634px;top:375px;width:15px;height:362px;background:#cdcdcd"></div>
<svg style="left:1636px;top:357px" width="11" height="9" viewBox="0 0 11 9"><polygon points="0,9 5.5,4 11,9 11,5.8 5.5,0 0,5.8" fill="#5e5e5e"/></svg>
<svg style="left:1636px;top:967px" width="11" height="9" viewBox="0 0 11 9"><polygon points="0,0 5.5,5 11,0 11,3.2 5.5,9 0,3.2" fill="#5e5e5e"/></svg>
<div class="a" style="left:214px;top:993px;width:1419px;height:17px;background:#f0f0f0"></div>
<div class="a" style="left:248px;top:994px;width:472px;height:15px;background:#cdcdcd"></div>
<svg style="left:230px;top:996px" width="9" height="11" viewBox="0 0 9 11"><polygon points="9,0 4,5.5 9,11 5.8,11 0,5.5 5.8,0" fill="#5e5e5e"/></svg>
<svg style="left:1607px;top:996px" width="9" height="11" viewBox="0 0 9 11"><polygon points="0,0 5,5.5 0,11 3.2,11 9,5.5 3.2,0" fill="#5e5e5e"/></svg>
<div class="a" style="left:1654px;top:139px;width:1px;height:871px;background:#d4d4d4"></div>
<div class="t" style="left:1669px;top:155px;height:28px;line-height:28px;font-size:19.5px;color:#4a9470;letter-spacing:-.45px">Query Settings</div>
<svg style="left:1882px;top:163px" width="12" height="12" viewBox="0 0 12 12" fill="none" stroke="#444" stroke-width="1.1"><path d="M.8 .8 L11.2 11.2 M11.2 .8 L.8 11.2"/></svg>
<svg style="left:1666px;top:200px" width="6" height="10" viewBox="0 0 6 10" fill="#fff" stroke="#8a8a8a" stroke-width=".9"><path d="M.6 .8 L5 5 L.6 9.2 Z"/></svg>
<div class="t" style="top:200px;left:1678px;font-weight:bold;font-size:11.5px;color:#1f6b48;letter-spacing:-.45px;">PROPERTIES</div>
<svg style="left:1665.5px;top:229.5px" width="6" height="6" viewBox="0 0 6 6" fill="#3a3a3a"><path d="M6 0 V6 H0 Z"/></svg>
<div class="t" style="top:226px;left:1678px;font-weight:bold;font-size:11.5px;color:#1f6b48;letter-spacing:-.45px;">APPLIED STEPS</div>
<div class="a" style="left:1678px;top:246px;width:218px;height:744px;background:#fff;border:1px solid #c6c6c6"></div>
<div class="a" style="left:1878px;top:247px;width:17px;height:742px;background:#f0f0f0"></div>
<div class="a" style="left:1879px;top:281px;width:15px;height:636px;background:#cdcdcd"></div>
<svg style="left:1881px;top:264px" width="11" height="9" viewBox="0 0 11 9"><polygon points="0,9 5.5,4 11,9 11,5.8 5.5,0 0,5.8" fill="#555"/></svg>
<svg style="left:1881px;top:963px" width="11" height="9" viewBox="0 0 11 9"><polygon points="0,0 5.5,5 11,0 11,3.2 5.5,9 0,3.2" fill="#555"/></svg>
<div class="t st" style="top:251px;left:1699px;">Source</div>
<svg style="left:1859px;top:251px" width="11" height="11" viewBox="0 0 11 11"><g stroke="#a3a3a3" stroke-width="1.35"><path d="M0 5.5 H11 M2.75 0.74 L8.25 10.26 M8.25 0.74 L2.75 10.26"/></g><circle cx="5.5" cy="5.5" r="3.3" fill="#a3a3a3"/><circle cx="5.5" cy="5.5" r="1.6" fill="#fff"/></svg>
<div class="t st" style="top:271px;left:1699px;">Navigation</div>
<svg style="left:1859px;top:271px" width="11" height="11" viewBox="0 0 11 11"><g stroke="#a3a3a3" stroke-width="1.35"><path d="M0 5.5 H11 M2.75 0.74 L8.25 10.26 M8.25 0.74 L2.75 10.26"/></g><circle cx="5.5" cy="5.5" r="3.3" fill="#a3a3a3"/><circle cx="5.5" cy="5.5" r="1.6" fill="#fff"/></svg>
<div class="t st" style="top:291px;left:1699px;">Promoted Headers</div>
<svg style="left:1859px;top:291px" width="11" height="11" viewBox="0 0 11 11"><g stroke="#a3a3a3" stroke-width="1.35"><path d="M0 5.5 H11 M2.75 0.74 L8.25 10.26 M8.25 0.74 L2.75 10.26"/></g><circle cx="5.5" cy="5.5" r="3.3" fill="#a3a3a3"/><circle cx="5.5" cy="5.5" r="1.6" fill="#fff"/></svg>
<div class="t st" style="top:311px;left:1699px;">Changed Type</div>
<div class="t st" style="top:331px;left:1699px;">Split Column by Position</div>
<svg style="left:1859px;top:331px" width="11" height="11" viewBox="0 0 11 11"><g stroke="#a3a3a3" stroke-width="1.35"><path d="M0 5.5 H11 M2.75 0.74 L8.25 10.26 M8.25 0.74 L2.75 10.26"/></g><circle cx="5.5" cy="5.5" r="3.3" fill="#a3a3a3"/><circle cx="5.5" cy="5.5" r="1.6" fill="#fff"/></svg>
<div class="t st" style="top:351px;left:1699px;">Changed Type1</div>
<div class="t st" style="top:371px;left:1699px;">Renamed Columns</div>
<div class="t st" style="top:391px;left:1699px;">Split Column by Position1</div>
<svg style="left:1859px;top:391px" width="11" height="11" viewBox="0 0 11 11"><g stroke="#a3a3a3" stroke-width="1.35"><path d="M0 5.5 H11 M2.75 0.74 L8.25 10.26 M8.25 0.74 L2.75 10.26"/></g><circle cx="5.5" cy="5.5" r="3.3" fill="#a3a3a3"/><circle cx="5.5" cy="5.5" r="1.6" fill="#fff"/></svg>
<div class="t st" style="top:411px;left:1699px;">Changed Type2</div>
<div class="t st" style="top:431px;left:1699px;">Split Column by Position2</div>
<svg style="left:1859px;top:431px" width="11" height="11" viewBox="0 0 11 11"><g stroke="#a3a3a3" stroke-width="1.35"><path d="M0 5.5 H11 M2.75 0.74 L8.25 10.26 M8.25 0.74 L2.75 10.26"/></g><circle cx="5.5" cy="5.5" r="3.3" fill="#a3a3a3"/><circle cx="5.5" cy="5.5" r="1.6" fill="#fff"/></svg>
<div class="t st" style="top:451px;left:1699px;">Changed Type3</div>
<div class="t st" style="top:471px;left:1699px;">Removed Columns</div>
<div class="t st" style="top:491px;left:1699px;">Renamed Columns1</div>
<div class="t st" style="top:511px;left:1699px;">Added Conditional Column</div>
<svg style="left:1859px;top:511px" width="11" height="11" viewBox="0 0 11 11"><g stroke="#a3a3a3" stroke-width="1.35"><path d="M0 5.5 H11 M2.75 0.74 L8.25 10.26 M8.25 0.74 L2.75 10.26"/></g><circle cx="5.5" cy="5.5" r="3.3" fill="#a3a3a3"/><circle cx="5.5" cy="5.5" r="1.6" fill="#fff"/></svg>
<div class="t st" style="top:531px;left:1699px;">Added Conditional Column1</div>
<svg style="left:1859px;top:531px" width="11" height="11" viewBox="0 0 11 11"><g stroke="#a3a3a3" stroke-width="1.35"><path d="M0 5.5 H11 M2.75 0.74 L8.25 10.26 M8.25 0.74 L2.75 10.26"/></g><circle cx="5.5" cy="5.5" r="3.3" fill="#a3a3a3"/><circle cx="5.5" cy="5.5" r="1.6" fill="#fff"/></svg>
<div class="t st" style="top:551px;left:1699px;">Split Column by Position3</div>
<svg style="left:1859px;top:551px" width="11" height="11" viewBox="0 0 11 11"><g stroke="#a3a3a3" stroke-width="1.35"><path d="M0 5.5 H11 M2.75 0.74 L8.25 10.26 M8.25 0.74 L2.75 10.26"/></g><circle cx="5.5" cy="5.5" r="3.3" fill="#a3a3a3"/><circle cx="5.5" cy="5.5" r="1.6" fill="#fff"/></svg>
<div class="t st" style="top:571px;left:1699px;">Changed Type4</div>
<div class="t st" style="top:591px;left:1699px;">Replaced Value</div>
<svg style="left:1859px;top:591px" width="11" height="11" viewBox="0 0 11 11"><g stroke="#a3a3a3" stroke-width="1.35"><path d="M0 5.5 H11 M2.75 0.74 L8.25 10.26 M8.25 0.74 L2.75 10.26"/></g><circle cx="5.5" cy="5.5" r="3.3" fill="#a3a3a3"/><circle cx="5.5" cy="5.5" r="1.6" fill="#fff"/></svg>
<div class="t st" style="top:611px;left:1699px;">Added Conditional Column2</div>
<svg style="left:1859px;top:611px" width="11" height="11" viewBox="0 0 11 11"><g stroke="#a3a3a3" stroke-width="1.35"><path d="M0 5.5 H11 M2.75 0.74 L8.25 10.26 M8.25 0.74 L2.75 10.26"/></g><circle cx="5.5" cy="5.5" r="3.3" fill="#a3a3a3"/><circle cx="5.5" cy="5.5" r="1.6" fill="#fff"/></svg>
<div class="t st" style="top:631px;left:1699px;">Reordered Columns1</div>
<div class="t st" style="top:651px;left:1699px;">Merged Columns2</div>
<svg style="left:1859px;top:651px" width="11" height="11" viewBox="0 0 11 11"><g stroke="#a3a3a3" stroke-width="1.35"><path d="M0 5.5 H11 M2.75 0.74 L8.25 10.26 M8.25 0.74 L2.75 10.26"/></g><circle cx="5.5" cy="5.5" r="3.3" fill="#a3a3a3"/><circle cx="5.5" cy="5.5" r="1.6" fill="#fff"/></svg>
<div class="t st" style="top:671px;left:1699px;">Renamed Columns3</div>
<div class="t st" style="top:691px;left:1699px;">Changed Type10</div>
<div class="t st" style="top:711px;left:1699px;">Merged Columns</div>
<svg style="left:1859px;top:711px" width="11" height="11" viewBox="0 0 11 11"><g stroke="#a3a3a3" stroke-width="1.35"><path d="M0 5.5 H11 M2.75 0.74 L8.25 10.26 M8.25 0.74 L2.75 10.26"/></g><circle cx="5.5" cy="5.5" r="3.3" fill="#a3a3a3"/><circle cx="5.5" cy="5.5" r="1.6" fill="#fff"/></svg>
<div class="t st" style="top:731px;left:1699px;">Changed Type5</div>
<div class="t st" style="top:751px;left:1699px;">Split Column by Delimiter</div>
<svg style="left:1859px;top:751px" width="11" height="11" viewBox="0 0 11 11"><g stroke="#a3a3a3" stroke-width="1.35"><path d="M0 5.5 H11 M2.75 0.74 L8.25 10.26 M8.25 0.74 L2.75 10.26"/></g><circle cx="5.5" cy="5.5" r="3.3" fill="#a3a3a3"/><circle cx="5.5" cy="5.5" r="1.6" fill="#fff"/></svg>
<div class="t st" style="top:771px;left:1699px;">Changed Type6</div>
<div class="t st" style="top:791px;left:1699px;">Renamed Columns2</div>
<div class="t st" style="top:811px;left:1699px;">Changed Type7</div>
<div class="t st" style="top:831px;left:1699px;">Added Custom</div>
<svg style="left:1859px;top:831px" width="11" height="11" viewBox="0 0 11 11"><g stroke="#a3a3a3" stroke-width="1.35"><path d="M0 5.5 H11 M2.75 0.74 L8.25 10.26 M8.25 0.74 L2.75 10.26"/></g><circle cx="5.5" cy="5.5" r="3.3" fill="#a3a3a3"/><circle cx="5.5" cy="5.5" r="1.6" fill="#fff"/></svg>
<div class="t st" style="top:851px;left:1699px;">Reordered Columns</div>
<div class="t st" style="top:871px;left:1699px;">Changed Type8</div>
<div class="t st" style="top:891px;left:1699px;">Added Custom1</div>
<svg style="left:1859px;top:891px" width="11" height="11" viewBox="0 0 11 11"><g stroke="#a3a3a3" stroke-width="1.35"><path d="M0 5.5 H11 M2.75 0.74 L8.25 10.26 M8.25 0.74 L2.75 10.26"/></g><circle cx="5.5" cy="5.5" r="3.3" fill="#a3a3a3"/><circle cx="5.5" cy="5.5" r="1.6" fill="#fff"/></svg>
<div class="t st" style="top:911px;left:1699px;">Added Custom2</div>
<svg style="left:1859px;top:911px" width="11" height="11" viewBox="0 0 11 11"><g stroke="#a3a3a3" stroke-width="1.35"><path d="M0 5.5 H11 M2.75 0.74 L8.25 10.26 M8.25 0.74 L2.75 10.26"/></g><circle cx="5.5" cy="5.5" r="3.3" fill="#a3a3a3"/><circle cx="5.5" cy="5.5" r="1.6" fill="#fff"/></svg>
<div class="t st" style="top:931px;left:1699px;">Changed Type9</div>
<div class="t st" style="top:951px;left:1699px;">Renamed Columns4</div>
<div class="t st" style="top:971px;left:1699px;">Removed Columns1</div>
<div class="a" style="left:0px;top:1010px;width:1920px;height:22px;background:#217346"></div>
<div class="t" style="top:1015px;left:5px;font-size:11px;color:#fff;letter-spacing:-.35px;">24 COLUMNS, 999+ ROWS</div>
<div class="t" style="top:1015px;left:151px;font-size:11px;color:#fff;letter-spacing:.03px;">Column profiling based on top 1000 rows</div>
<div class="t  r" style="top:1015px;left:1615px;width:300px;font-size:11px;color:#fff;letter-spacing:-.5px;">PREVIEW DOWNLOADED ON SUNDAY</div>
<div class="a" dir="rtl" style="left:830px;top:889px;width:260px;height:100px;line-height:100px;text-align:center;transform:scale(1.02,1.2);font-family:'DejaVu Sans',sans-serif;font-weight:bold;font-size:64px;color:#000;-webkit-text-stroke:1.2px #000;opacity:.09;pointer-events:none">مستقل</div>
<div class="a" style="left:830px;top:968px;width:260px;height:44px;line-height:44px;text-align:center;font-weight:bold;font-size:35px;letter-spacing:1.2px;color:#000;-webkit-text-stroke:1px #000;opacity:.09;pointer-events:none">mostaql.com</div>
</body></html>
